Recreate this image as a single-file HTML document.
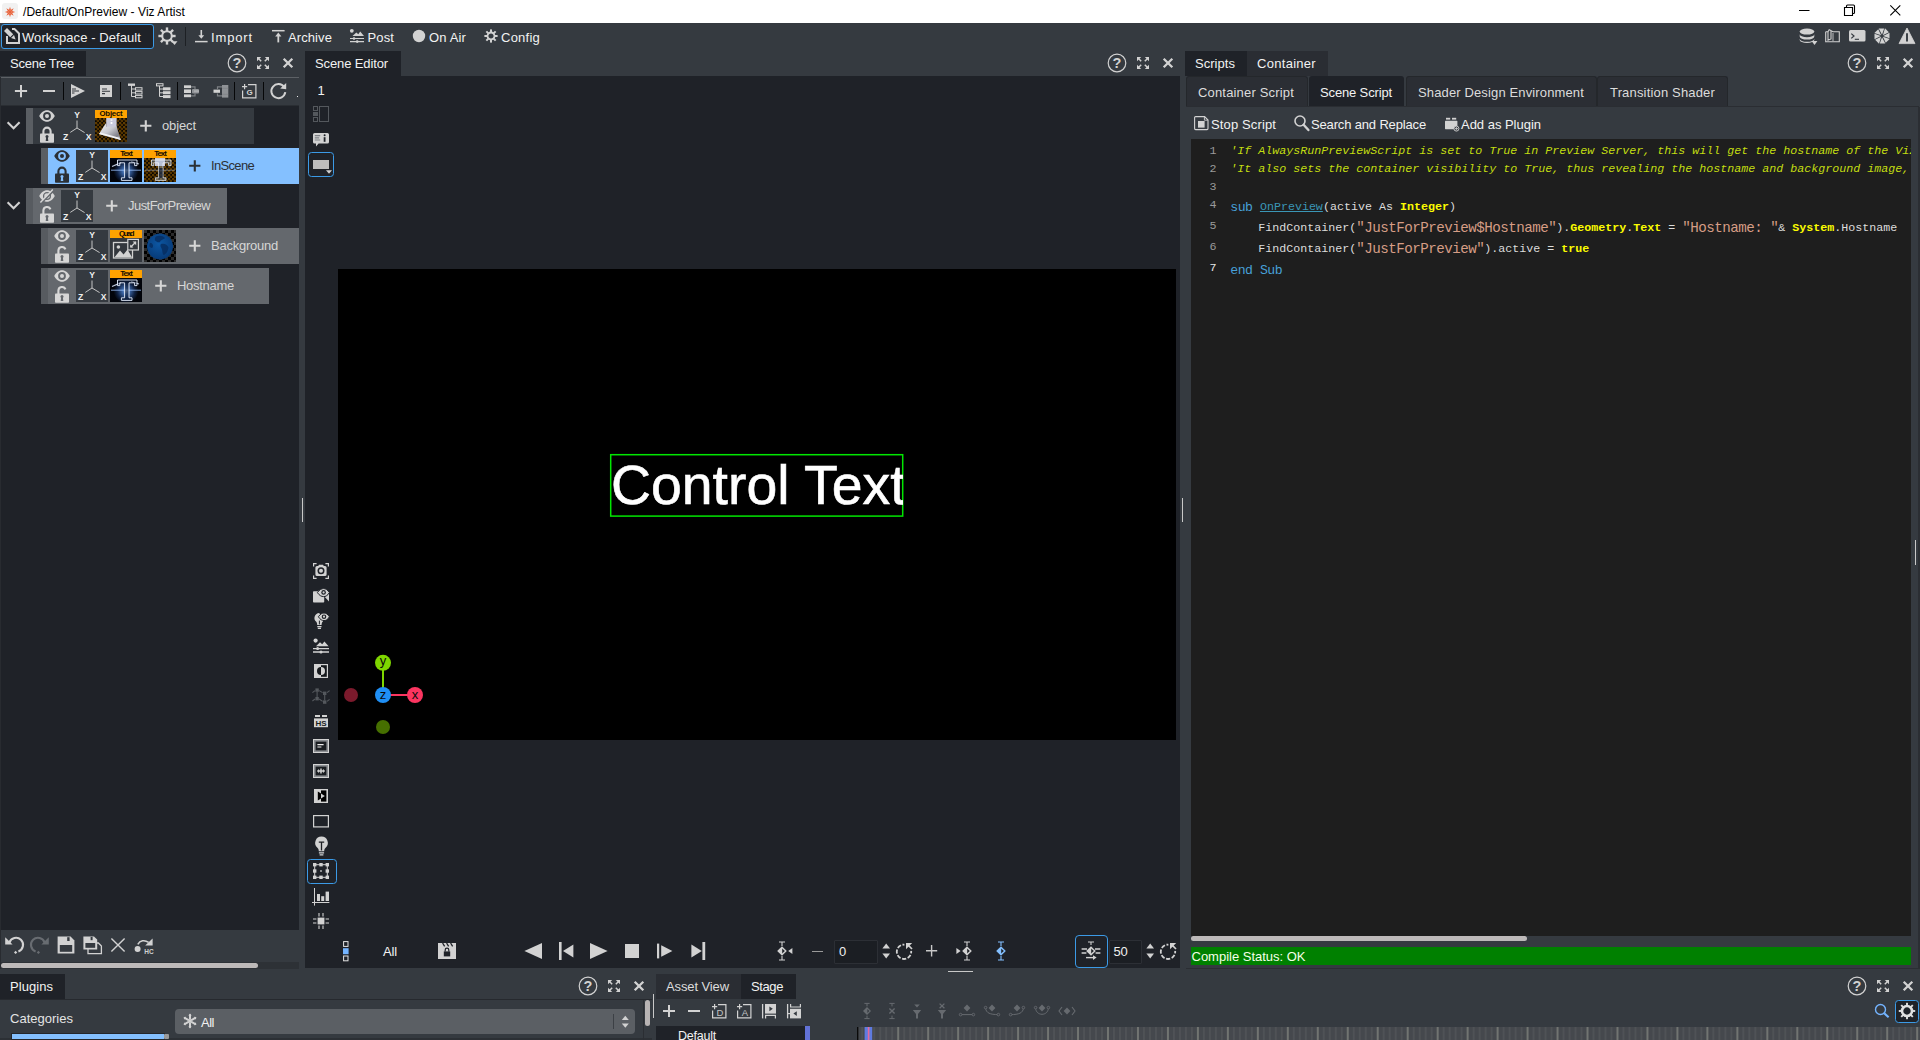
<!DOCTYPE html>
<html lang="en"><head><meta charset="utf-8"><title>/Default/OnPreview - Viz Artist</title>
<style>
html,body{margin:0;padding:0}
body{width:1920px;height:1040px;overflow:hidden;background:#353a40;position:relative;font-family:"Liberation Sans","DejaVu Sans",sans-serif;}
div,span,svg{position:absolute;display:block}
.t{font-family:"Liberation Sans","DejaVu Sans",sans-serif;white-space:pre}
.m{font-family:"Liberation Mono","DejaVu Sans Mono",monospace;white-space:pre}
svg{overflow:visible}
</style></head><body>
<div style="left:0px;top:0px;width:1920px;height:23px;background:#ffffff;"></div>
<span class="t" style="left:23px;top:3.84px;font-size:12px;line-height:16px;color:#000;letter-spacing:0.048px;">/Default/OnPreview - Viz Artist</span>
<div style="left:1px;top:24px;width:151px;height:23px;background:#1f2228;border:1px solid #3b9ae6;border-radius:3px"></div>
<span class="t" style="left:22px;top:29.00px;font-size:13px;line-height:17px;color:#f2f2f2;letter-spacing:0.077px;">Workspace - Default</span>
<div style="left:185px;top:27px;width:1px;height:19px;background:#1d2024;"></div>
<span class="t" style="left:211px;top:29.00px;font-size:13px;line-height:17px;color:#f2f2f2;letter-spacing:0.859px;">Import</span>
<span class="t" style="left:288px;top:29.00px;font-size:13px;line-height:17px;color:#f2f2f2;letter-spacing:0.092px;">Archive</span>
<span class="t" style="left:367.5px;top:29.00px;font-size:13px;line-height:17px;color:#f2f2f2;letter-spacing:0.121px;">Post</span>
<span class="t" style="left:429px;top:29.00px;font-size:13px;line-height:17px;color:#f2f2f2;letter-spacing:0.146px;">On Air</span>
<span class="t" style="left:501px;top:29.00px;font-size:13px;line-height:17px;color:#f2f2f2;letter-spacing:0.237px;">Config</span>
<div style="left:0px;top:51px;width:86px;height:25px;background:#1f2228;"></div>
<span class="t" style="left:10px;top:55.00px;font-size:13px;line-height:17px;color:#f2f2f2;letter-spacing:-0.250px;">Scene Tree</span>
<div style="left:0px;top:77px;width:1px;height:892px;background:#282b30;"></div>
<div style="left:1px;top:77px;width:298px;height:1px;background:#5d6166;"></div>
<div style="left:1px;top:105px;width:298px;height:1px;background:#2a2e33;"></div>
<div style="left:1px;top:106px;width:298px;height:824px;background:#1f2228;"></div>
<div style="left:26px;top:108px;width:228px;height:36px;background:#353a40;"></div>
<div style="left:26px;top:108px;width:7px;height:36px;background:#5a5e63;"></div>
<div style="left:41px;top:148px;width:258px;height:36px;background:#84c0ff;"></div>
<div style="left:41px;top:148px;width:7px;height:36px;background:#5a5e63;"></div>
<div style="left:26px;top:188px;width:201px;height:36px;background:#64686d;"></div>
<div style="left:26px;top:188px;width:7px;height:36px;background:#575b60;"></div>
<div style="left:41px;top:228px;width:258px;height:36px;background:#64686d;"></div>
<div style="left:41px;top:228px;width:7px;height:36px;background:#575b60;"></div>
<div style="left:41px;top:268px;width:228px;height:36px;background:#64686d;"></div>
<div style="left:41px;top:268px;width:7px;height:36px;background:#575b60;"></div>
<span class="t" style="left:162px;top:117.00px;font-size:13px;line-height:17px;color:#d6d6d6;letter-spacing:-0.117px;">object</span>
<span class="t" style="left:211px;top:157.00px;font-size:13px;line-height:17px;color:#2b3036;letter-spacing:-0.672px;">InScene</span>
<span class="t" style="left:128px;top:197.00px;font-size:13px;line-height:17px;color:#d6d6d6;letter-spacing:-0.541px;">JustForPreview</span>
<span class="t" style="left:211px;top:237.00px;font-size:13px;line-height:17px;color:#d6d6d6;letter-spacing:-0.239px;">Background</span>
<span class="t" style="left:177px;top:277.00px;font-size:13px;line-height:17px;color:#d6d6d6;letter-spacing:-0.281px;">Hostname</span>
<div style="left:1px;top:930px;width:298px;height:33px;background:#353a40;"></div>
<div style="left:1px;top:962px;width:298px;height:7px;background:#2d3136;"></div>
<div style="left:1px;top:963px;width:257px;height:5px;background:#bdb9b9;border-radius:3px"></div>
<div style="left:305px;top:51px;width:96px;height:25px;background:#1f2228;"></div>
<span class="t" style="left:315px;top:55.00px;font-size:13px;line-height:17px;color:#f2f2f2;letter-spacing:-0.120px;">Scene Editor</span>
<div style="left:305px;top:76px;width:875px;height:892px;background:#1f2228;"></div>
<div style="left:338px;top:269px;width:838px;height:471px;background:#000;"></div>
<span class="t" style="left:317.5px;top:82.00px;font-size:13px;line-height:17px;color:#f2f2f2;">1</span>
<svg style="left:609px;top:453px;" width="296" height="65" viewBox="0 0 296 65"><rect x="1.7" y="1.7" width="292" height="61.4" fill="none" stroke="#00e600" stroke-width="1.5"/></svg>
<span class="t" style="left:611px;top:448.80px;font-size:55.4px;line-height:72px;color:#fff;width:291.5px;overflow:hidden;-webkit-text-stroke:0.6px #fff;">Control Text</span>
<div style="left:1185px;top:51px;width:62px;height:25px;background:#1f2228;"></div>
<div style="left:1247px;top:51px;width:81px;height:25px;background:#2a2d33;"></div>
<span class="t" style="left:1195px;top:55.00px;font-size:13px;line-height:17px;color:#f2f2f2;letter-spacing:0.038px;">Scripts</span>
<span class="t" style="left:1257px;top:55.00px;font-size:13px;line-height:17px;color:#f2f2f2;letter-spacing:0.292px;">Container</span>
<div style="left:1186px;top:76px;width:120px;height:30px;background:#2b2e34;border:1px solid #24272b;border-bottom:none;border-radius:3px 3px 0 0"></div>
<div style="left:1309px;top:76px;width:95px;height:30px;background:#1f2228;border-radius:3px 3px 0 0"></div>
<div style="left:1406px;top:76px;width:189px;height:30px;background:#2b2e34;border:1px solid #24272b;border-bottom:none;border-radius:3px 3px 0 0"></div>
<div style="left:1597px;top:76px;width:129px;height:30px;background:#2b2e34;border:1px solid #24272b;border-bottom:none;border-radius:3px 3px 0 0"></div>
<div style="left:1186px;top:106px;width:733px;height:1px;background:#2a2d32;"></div>
<div style="left:1918px;top:107px;width:2px;height:862px;background:#2b2e33;"></div>
<div style="left:1186px;top:968px;width:734px;height:1px;background:#2b2e33;"></div>
<span class="t" style="left:1198px;top:84.00px;font-size:13px;line-height:17px;color:#dcdcdc;letter-spacing:0.174px;">Container Script</span>
<span class="t" style="left:1320px;top:84.00px;font-size:13px;line-height:17px;color:#f2f2f2;letter-spacing:-0.142px;">Scene Script</span>
<span class="t" style="left:1418px;top:84.00px;font-size:13px;line-height:17px;color:#dcdcdc;letter-spacing:0.136px;">Shader Design Environment</span>
<span class="t" style="left:1610px;top:84.00px;font-size:13px;line-height:17px;color:#dcdcdc;letter-spacing:0.168px;">Transition Shader</span>
<span class="t" style="left:1211px;top:116.00px;font-size:13px;line-height:17px;color:#f2f2f2;letter-spacing:0.128px;">Stop Script</span>
<span class="t" style="left:1311px;top:116.00px;font-size:13px;line-height:17px;color:#f2f2f2;letter-spacing:-0.156px;">Search and Replace</span>
<span class="t" style="left:1461px;top:116.00px;font-size:13px;line-height:17px;color:#f2f2f2;letter-spacing:-0.018px;">Add as Plugin</span>
<div style="left:1191px;top:139px;width:720px;height:797px;background:#1e1e1e;"></div>
<div style="left:1191px;top:936px;width:336px;height:5px;background:#bdb9b9;border-radius:3px"></div>
<div style="left:1191px;top:947px;width:720px;height:18px;background:#008000;"></div>
<span class="t" style="left:1191.5px;top:948.00px;font-size:13px;line-height:17px;color:#f4ffe8;letter-spacing:-0.009px;">Compile Status: OK</span>
<div style="left:0px;top:974px;width:65px;height:25px;background:#1f2228;"></div>
<span class="t" style="left:10px;top:978.00px;font-size:13px;line-height:17px;color:#f2f2f2;letter-spacing:0.051px;">Plugins</span>
<div style="left:0px;top:999px;width:652px;height:1px;background:#26292e;"></div>
<span class="t" style="left:10px;top:1010.00px;font-size:13px;line-height:17px;color:#e4e4e4;letter-spacing:0.013px;">Categories</span>
<div style="left:175px;top:1009px;width:460px;height:25px;background:#5b5f64;border-radius:4px"></div>
<span class="t" style="left:201px;top:1014.00px;font-size:13px;line-height:17px;color:#f2f2f2;letter-spacing:-0.484px;">All</span>
<div style="left:613px;top:1014px;width:1px;height:15px;background:#3c4045;"></div>
<div style="left:0px;top:1038px;width:652px;height:2px;background:#2c3035;"></div>
<div style="left:11px;top:1033px;width:152px;height:5px;background:#84c0ff;border:1px solid #24272c"></div>
<div style="left:164px;top:1034px;width:5px;height:5px;background:#9a9a9a;border-radius:1px"></div>
<div style="left:645px;top:1000px;width:5px;height:26px;background:#b8b4b4;border-radius:3px"></div>
<div style="left:643px;top:1000px;width:1px;height:40px;background:#2b2e33;"></div>
<div style="left:653px;top:994px;width:1px;height:24px;background:#c8c8c8;"></div>
<div style="left:656px;top:974px;width:85px;height:25px;background:#2a2d33;"></div>
<div style="left:741px;top:974px;width:55px;height:25px;background:#1f2228;"></div>
<span class="t" style="left:666px;top:978.00px;font-size:13px;line-height:17px;color:#dcdcdc;letter-spacing:-0.108px;">Asset View</span>
<span class="t" style="left:751px;top:978.00px;font-size:13px;line-height:17px;color:#f2f2f2;letter-spacing:-0.397px;">Stage</span>
<div style="left:656px;top:1026px;width:149px;height:14px;background:#1f2228;"></div>
<div style="left:805px;top:1026px;width:5px;height:14px;background:#6272d6;"></div>
<span class="t" style="left:678px;top:1027.67px;font-size:12.5px;line-height:16px;color:#f2f2f2;letter-spacing:-0.230px;">Default</span>
<div style="left:302px;top:498px;width:1px;height:24px;background:#c8c8c8;"></div>
<div style="left:1182px;top:498px;width:1px;height:24px;background:#c8c8c8;"></div>
<div style="left:1915px;top:540px;width:1px;height:25px;background:#c8c8c8;"></div>
<div style="left:948px;top:971px;width:25px;height:1px;background:#c8c8c8;"></div>
<div style="left:1191px;top:139px;width:720px;height:797px;overflow:hidden">
<span class="m" style="left:18.5px;top:5.39px;font-size:11.67px;line-height:15px;color:#9a9a9a;letter-spacing:-0.400px;">1</span>
<span class="m" style="left:18.5px;top:23.39px;font-size:11.67px;line-height:15px;color:#9a9a9a;letter-spacing:-0.400px;">2</span>
<span class="m" style="left:18.5px;top:41.39px;font-size:11.67px;line-height:15px;color:#9a9a9a;letter-spacing:-0.400px;">3</span>
<span class="m" style="left:18.5px;top:59.39px;font-size:11.67px;line-height:15px;color:#9a9a9a;letter-spacing:-0.400px;">4</span>
<span class="m" style="left:18.5px;top:80.39px;font-size:11.67px;line-height:15px;color:#9a9a9a;letter-spacing:-0.400px;">5</span>
<span class="m" style="left:18.5px;top:101.39px;font-size:11.67px;line-height:15px;color:#9a9a9a;letter-spacing:-0.400px;">6</span>
<span class="m" style="left:18.5px;top:122.39px;font-size:11.67px;line-height:15px;color:#e8e8e8;letter-spacing:-0.400px;">7</span>
<span class="m" style="left:39.3px;top:5.39px;font-size:11.67px;line-height:15px;color:#c3dd11;letter-spacing:0.005px;font-style:italic;">&#x27;If AlwaysRunPreviewScript is set to True in Preview Server, this will get the hostname of the Viz Engine</span>
<span class="m" style="left:39.3px;top:23.39px;font-size:11.67px;line-height:15px;color:#c3dd11;letter-spacing:0.005px;font-style:italic;">&#x27;It also sets the container visibility to True, thus revealing the hostname and background image, and</span>
<span class="m" style="left:39.3px;top:59.98px;font-size:13.2px;line-height:17px;color:#47a0d8;letter-spacing:-0.514px;">sub </span>
<span class="m" style="left:68.9px;top:61.39px;font-size:11.67px;line-height:15px;color:#3a96b6;letter-spacing:0.003px;text-decoration:underline;">OnPreview</span>
<span class="m" style="left:131.9px;top:61.39px;font-size:11.67px;line-height:15px;color:#dcdcdc;letter-spacing:0.004px;">(active As </span>
<span class="m" style="left:208.9px;top:61.39px;font-size:11.67px;line-height:15px;color:#fbfb00;letter-spacing:0.004px;font-weight:700;">Integer</span>
<span class="m" style="left:257.9px;top:61.39px;font-size:11.67px;line-height:15px;color:#dcdcdc;letter-spacing:0.000px;">)</span>
<span class="m" style="left:39.3px;top:82.39px;font-size:11.67px;line-height:15px;color:#dcdcdc;letter-spacing:0.004px;">    FindContainer(</span>
<span class="m" style="left:165.3px;top:80.22px;font-size:14.2px;line-height:18px;color:#d69d85;letter-spacing:-0.514px;">&quot;JustForPreview$Hostname&quot;</span>
<span class="m" style="left:365.3px;top:82.39px;font-size:11.67px;line-height:15px;color:#dcdcdc;letter-spacing:0.000px;">).</span>
<span class="m" style="left:379.3px;top:82.39px;font-size:11.67px;line-height:15px;color:#fbfb00;letter-spacing:0.004px;font-weight:700;">Geometry</span>
<span class="m" style="left:435.3px;top:82.39px;font-size:11.67px;line-height:15px;color:#dcdcdc;letter-spacing:0.000px;">.</span>
<span class="m" style="left:442.3px;top:82.39px;font-size:11.67px;line-height:15px;color:#fbfb00;letter-spacing:0.004px;font-weight:700;">Text</span>
<span class="m" style="left:470.3px;top:82.39px;font-size:11.67px;line-height:15px;color:#dcdcdc;letter-spacing:0.000px;"> = </span>
<span class="m" style="left:491.3px;top:80.22px;font-size:14.2px;line-height:18px;color:#d69d85;letter-spacing:-0.514px;">&quot;Hostname: &quot;</span>
<span class="m" style="left:587.3px;top:82.39px;font-size:11.67px;line-height:15px;color:#dcdcdc;letter-spacing:0.000px;">&amp; </span>
<span class="m" style="left:601.3px;top:82.39px;font-size:11.67px;line-height:15px;color:#fbfb00;letter-spacing:0.003px;font-weight:700;">System</span>
<span class="m" style="left:643.3px;top:82.39px;font-size:11.67px;line-height:15px;color:#dcdcdc;letter-spacing:0.003px;">.Hostname</span>
<span class="m" style="left:39.3px;top:103.39px;font-size:11.67px;line-height:15px;color:#dcdcdc;letter-spacing:0.004px;">    FindContainer(</span>
<span class="m" style="left:165.3px;top:101.22px;font-size:14.2px;line-height:18px;color:#d69d85;letter-spacing:-0.515px;">&quot;JustForPreview&quot;</span>
<span class="m" style="left:293.3px;top:103.39px;font-size:11.67px;line-height:15px;color:#dcdcdc;letter-spacing:0.004px;">).active = </span>
<span class="m" style="left:370.3px;top:103.39px;font-size:11.67px;line-height:15px;color:#fbfb00;letter-spacing:0.004px;font-weight:700;">true</span>
<span class="m" style="left:39.3px;top:122.98px;font-size:13.2px;line-height:17px;color:#47a0d8;letter-spacing:-0.515px;">end Sub</span>
</div>
<svg style="left:227px;top:53px;" width="20" height="20" viewBox="0 0 20 20"><circle cx="10" cy="10" r="8.8" fill="none" stroke="#d2d2d2" stroke-width="1.2"/><text x="10" y="15" font-family="Liberation Sans,sans-serif" font-weight="700" font-size="14.5" text-anchor="middle" fill="#d2d2d2">?</text></svg>
<svg style="left:256px;top:56px;" width="14" height="14" viewBox="-7 -7 14 14"><path d="M-6 -6 L-1.7999999999999998 -6 L-6 -1.7999999999999998Z" fill="#d2d2d2"/><path d="M-4.5 -4.5 L-1.8 -1.8" stroke="#d2d2d2" stroke-width="1.5" fill="none"/><path d="M6 -6 L1.7999999999999998 -6 L6 -1.7999999999999998Z" fill="#d2d2d2"/><path d="M4.5 -4.5 L1.8 -1.8" stroke="#d2d2d2" stroke-width="1.5" fill="none"/><path d="M-6 6 L-1.7999999999999998 6 L-6 1.7999999999999998Z" fill="#d2d2d2"/><path d="M-4.5 4.5 L-1.8 1.8" stroke="#d2d2d2" stroke-width="1.5" fill="none"/><path d="M6 6 L1.7999999999999998 6 L6 1.7999999999999998Z" fill="#d2d2d2"/><path d="M4.5 4.5 L1.8 1.8" stroke="#d2d2d2" stroke-width="1.5" fill="none"/></svg>
<svg style="left:282px;top:57px;" width="12" height="12" viewBox="-6 -6 12 12"><path d="M-4.3 -4.3L4.3 4.3M4.3 -4.3L-4.3 4.3" stroke="#d2d2d2" stroke-width="2.3" fill="none"/></svg>
<svg style="left:1107px;top:53px;" width="20" height="20" viewBox="0 0 20 20"><circle cx="10" cy="10" r="8.8" fill="none" stroke="#d2d2d2" stroke-width="1.2"/><text x="10" y="15" font-family="Liberation Sans,sans-serif" font-weight="700" font-size="14.5" text-anchor="middle" fill="#d2d2d2">?</text></svg>
<svg style="left:1136px;top:56px;" width="14" height="14" viewBox="-7 -7 14 14"><path d="M-6 -6 L-1.7999999999999998 -6 L-6 -1.7999999999999998Z" fill="#d2d2d2"/><path d="M-4.5 -4.5 L-1.8 -1.8" stroke="#d2d2d2" stroke-width="1.5" fill="none"/><path d="M6 -6 L1.7999999999999998 -6 L6 -1.7999999999999998Z" fill="#d2d2d2"/><path d="M4.5 -4.5 L1.8 -1.8" stroke="#d2d2d2" stroke-width="1.5" fill="none"/><path d="M-6 6 L-1.7999999999999998 6 L-6 1.7999999999999998Z" fill="#d2d2d2"/><path d="M-4.5 4.5 L-1.8 1.8" stroke="#d2d2d2" stroke-width="1.5" fill="none"/><path d="M6 6 L1.7999999999999998 6 L6 1.7999999999999998Z" fill="#d2d2d2"/><path d="M4.5 4.5 L1.8 1.8" stroke="#d2d2d2" stroke-width="1.5" fill="none"/></svg>
<svg style="left:1162px;top:57px;" width="12" height="12" viewBox="-6 -6 12 12"><path d="M-4.3 -4.3L4.3 4.3M4.3 -4.3L-4.3 4.3" stroke="#d2d2d2" stroke-width="2.3" fill="none"/></svg>
<svg style="left:1847px;top:53px;" width="20" height="20" viewBox="0 0 20 20"><circle cx="10" cy="10" r="8.8" fill="none" stroke="#d2d2d2" stroke-width="1.2"/><text x="10" y="15" font-family="Liberation Sans,sans-serif" font-weight="700" font-size="14.5" text-anchor="middle" fill="#d2d2d2">?</text></svg>
<svg style="left:1876px;top:56px;" width="14" height="14" viewBox="-7 -7 14 14"><path d="M-6 -6 L-1.7999999999999998 -6 L-6 -1.7999999999999998Z" fill="#d2d2d2"/><path d="M-4.5 -4.5 L-1.8 -1.8" stroke="#d2d2d2" stroke-width="1.5" fill="none"/><path d="M6 -6 L1.7999999999999998 -6 L6 -1.7999999999999998Z" fill="#d2d2d2"/><path d="M4.5 -4.5 L1.8 -1.8" stroke="#d2d2d2" stroke-width="1.5" fill="none"/><path d="M-6 6 L-1.7999999999999998 6 L-6 1.7999999999999998Z" fill="#d2d2d2"/><path d="M-4.5 4.5 L-1.8 1.8" stroke="#d2d2d2" stroke-width="1.5" fill="none"/><path d="M6 6 L1.7999999999999998 6 L6 1.7999999999999998Z" fill="#d2d2d2"/><path d="M4.5 4.5 L1.8 1.8" stroke="#d2d2d2" stroke-width="1.5" fill="none"/></svg>
<svg style="left:1902px;top:57px;" width="12" height="12" viewBox="-6 -6 12 12"><path d="M-4.3 -4.3L4.3 4.3M4.3 -4.3L-4.3 4.3" stroke="#d2d2d2" stroke-width="2.3" fill="none"/></svg>
<svg style="left:578px;top:976px;" width="20" height="20" viewBox="0 0 20 20"><circle cx="10" cy="10" r="8.8" fill="none" stroke="#d2d2d2" stroke-width="1.2"/><text x="10" y="15" font-family="Liberation Sans,sans-serif" font-weight="700" font-size="14.5" text-anchor="middle" fill="#d2d2d2">?</text></svg>
<svg style="left:607px;top:979px;" width="14" height="14" viewBox="-7 -7 14 14"><path d="M-6 -6 L-1.7999999999999998 -6 L-6 -1.7999999999999998Z" fill="#d2d2d2"/><path d="M-4.5 -4.5 L-1.8 -1.8" stroke="#d2d2d2" stroke-width="1.5" fill="none"/><path d="M6 -6 L1.7999999999999998 -6 L6 -1.7999999999999998Z" fill="#d2d2d2"/><path d="M4.5 -4.5 L1.8 -1.8" stroke="#d2d2d2" stroke-width="1.5" fill="none"/><path d="M-6 6 L-1.7999999999999998 6 L-6 1.7999999999999998Z" fill="#d2d2d2"/><path d="M-4.5 4.5 L-1.8 1.8" stroke="#d2d2d2" stroke-width="1.5" fill="none"/><path d="M6 6 L1.7999999999999998 6 L6 1.7999999999999998Z" fill="#d2d2d2"/><path d="M4.5 4.5 L1.8 1.8" stroke="#d2d2d2" stroke-width="1.5" fill="none"/></svg>
<svg style="left:633px;top:980px;" width="12" height="12" viewBox="-6 -6 12 12"><path d="M-4.3 -4.3L4.3 4.3M4.3 -4.3L-4.3 4.3" stroke="#d2d2d2" stroke-width="2.3" fill="none"/></svg>
<svg style="left:1847px;top:976px;" width="20" height="20" viewBox="0 0 20 20"><circle cx="10" cy="10" r="8.8" fill="none" stroke="#d2d2d2" stroke-width="1.2"/><text x="10" y="15" font-family="Liberation Sans,sans-serif" font-weight="700" font-size="14.5" text-anchor="middle" fill="#d2d2d2">?</text></svg>
<svg style="left:1876px;top:979px;" width="14" height="14" viewBox="-7 -7 14 14"><path d="M-6 -6 L-1.7999999999999998 -6 L-6 -1.7999999999999998Z" fill="#d2d2d2"/><path d="M-4.5 -4.5 L-1.8 -1.8" stroke="#d2d2d2" stroke-width="1.5" fill="none"/><path d="M6 -6 L1.7999999999999998 -6 L6 -1.7999999999999998Z" fill="#d2d2d2"/><path d="M4.5 -4.5 L1.8 -1.8" stroke="#d2d2d2" stroke-width="1.5" fill="none"/><path d="M-6 6 L-1.7999999999999998 6 L-6 1.7999999999999998Z" fill="#d2d2d2"/><path d="M-4.5 4.5 L-1.8 1.8" stroke="#d2d2d2" stroke-width="1.5" fill="none"/><path d="M6 6 L1.7999999999999998 6 L6 1.7999999999999998Z" fill="#d2d2d2"/><path d="M4.5 4.5 L1.8 1.8" stroke="#d2d2d2" stroke-width="1.5" fill="none"/></svg>
<svg style="left:1902px;top:980px;" width="12" height="12" viewBox="-6 -6 12 12"><path d="M-4.3 -4.3L4.3 4.3M4.3 -4.3L-4.3 4.3" stroke="#d2d2d2" stroke-width="2.3" fill="none"/></svg>
<div style="left:63px;top:82px;width:1px;height:18px;background:#060708;"></div>
<div style="left:120px;top:82px;width:1px;height:18px;background:#060708;"></div>
<div style="left:177px;top:82px;width:1px;height:18px;background:#060708;"></div>
<div style="left:234px;top:82px;width:1px;height:18px;background:#060708;"></div>
<div style="left:263px;top:82px;width:1px;height:18px;background:#060708;"></div>
<svg style="left:14px;top:84px;" width="14" height="14" viewBox="0 0 14 14"><path d="M7 1V13.2M0.9 7H13.1" stroke="#d2d2d2" stroke-width="2" fill="none"/></svg>
<svg style="left:42px;top:84px;" width="14" height="14" viewBox="0 0 14 14"><path d="M1 7H13" stroke="#d2d2d2" stroke-width="2" fill="none"/></svg>
<svg style="left:70px;top:83px;" width="16" height="16" viewBox="0 0 16 16"><path d="M1 1L15 8L1 15Z" fill="#d2d2d2"/><path d="M2 6H6M2 8H9M2 10H4.5" stroke="#33373d" stroke-width="1"/></svg>
<svg style="left:100px;top:85px;" width="12" height="12" viewBox="0 0 12 12"><rect width="12" height="12" fill="#d2d2d2"/><path d="M2 4H7M2 6.3H10M2 8.6H5" stroke="#33373d" stroke-width="1.1"/></svg>
<svg style="left:128px;top:83px;" width="15" height="16" viewBox="0 0 15 16"><rect x="0" y="0.5" width="7" height="2.4" fill="#d2d2d2"/><path d="M3.5 2V13.5H7M3.5 6H7M3.5 9.8H7" stroke="#d2d2d2" stroke-width="1" fill="none"/><rect x="7.5" y="4.7" width="6.5" height="2.4" fill="none" stroke="#d2d2d2"/><rect x="7.5" y="8.6" width="6.5" height="2.4" fill="none" stroke="#d2d2d2"/><rect x="7.5" y="12.4" width="6.5" height="2.4" fill="none" stroke="#d2d2d2"/></svg>
<svg style="left:156px;top:83px;" width="15" height="16" viewBox="0 0 15 16"><rect x="0.5" y="0.7" width="6.5" height="2.2" fill="none" stroke="#d2d2d2"/><path d="M3.5 3V13.5H7M3.5 6H7M3.5 9.8H7" stroke="#d2d2d2" stroke-width="1" fill="none"/><rect x="7" y="4.3" width="7.5" height="3" fill="#d2d2d2"/><rect x="7" y="8.2" width="7.5" height="3" fill="#d2d2d2"/><rect x="7" y="12.1" width="7.5" height="3" fill="#d2d2d2"/></svg>
<svg style="left:184px;top:85px;" width="16" height="13" viewBox="0 0 16 13"><rect x="0" y="0.3" width="7" height="2.8" fill="#d2d2d2"/><rect x="0" y="4.4" width="7" height="3.6" fill="#d2d2d2"/><rect x="0" y="9.4" width="7" height="2.8" fill="#d2d2d2"/><path d="M7 1.8H11V4M7 10.8H11V8.5" stroke="#7d8084" stroke-width="1.2" fill="none"/><rect x="8" y="4" width="7" height="4.4" rx="1" fill="#8f9296"/><rect x="10" y="5.2" width="5" height="2" fill="#a9abae"/></svg>
<svg style="left:213px;top:85px;" width="16" height="13" viewBox="0 0 16 13"><rect x="0.5" y="4.6" width="6.5" height="3.2" fill="#d2d2d2"/><path d="M9.5 1.8H4.5V4M9.5 10.8H4.5V8.5" stroke="#7d8084" stroke-width="1.2" fill="none"/><rect x="9" y="0" width="6.3" height="12.6" fill="#8f9296"/><path d="M9 3.3H15.3M9 9.3H15.3" stroke="#7a7d81" stroke-width="0.6"/></svg>
<svg style="left:242px;top:84px;" width="15" height="15" viewBox="0 0 15 15"><path d="M6 0.6H13.9V13.9H0.6V6.5" stroke="#d2d2d2" stroke-width="1.2" fill="none"/><path d="M2.6 0V5.2M0 2.6H5.2" stroke="#d2d2d2" stroke-width="1.2"/><text x="7.6" y="11.4" font-family="Liberation Sans,sans-serif" font-weight="700" font-size="8" text-anchor="middle" fill="#d2d2d2">G</text></svg>
<svg style="left:269px;top:82px;" width="19" height="19" viewBox="0 0 19 19"><path d="M15.2 5.2A7 7 0 1 0 16.3 10.2" stroke="#d2d2d2" stroke-width="2" fill="none"/><path d="M11.2 6.6L17.2 1V7.3Z" fill="#d2d2d2"/></svg>
<div style="left:297px;top:96px;width:1px;height:1px;background:#e8e8e8;"></div>
<div style="left:2px;top:3px;width:16px;height:16px;background:#f1f1f1;border-radius:3px"></div>
<svg style="left:4px;top:6px;" width="12" height="12" viewBox="-6 -6 12 12"><path d="M0 0L-0.9 -2.2L0 -5.2L0.9 -2.2Z" fill="#e9633c" transform="rotate(0)"/><path d="M0 0L-0.9 -2.2L0 -5.2L0.9 -2.2Z" fill="#e9633c" transform="rotate(45)"/><path d="M0 0L-0.9 -2.2L0 -5.2L0.9 -2.2Z" fill="#e9633c" transform="rotate(90)"/><path d="M0 0L-0.9 -2.2L0 -5.2L0.9 -2.2Z" fill="#e9633c" transform="rotate(135)"/><path d="M0 0L-0.9 -2.2L0 -5.2L0.9 -2.2Z" fill="#e9633c" transform="rotate(180)"/><path d="M0 0L-0.9 -2.2L0 -5.2L0.9 -2.2Z" fill="#e9633c" transform="rotate(225)"/><path d="M0 0L-0.9 -2.2L0 -5.2L0.9 -2.2Z" fill="#e9633c" transform="rotate(270)"/><path d="M0 0L-0.9 -2.2L0 -5.2L0.9 -2.2Z" fill="#e9633c" transform="rotate(315)"/><circle r="1.4" fill="#e9633c"/></svg>
<svg style="left:1799px;top:5px;" width="11" height="11" viewBox="0 0 11 11"><path d="M0 5.5H10.5" stroke="#000" stroke-width="1"/></svg>
<svg style="left:1844px;top:4px;" width="12" height="12" viewBox="0 0 12 12"><path d="M0.5 3.5H8.5V11.5H0.5Z" fill="none" stroke="#000" stroke-width="1.1"/><path d="M2.5 3.5V2A1 1 0 0 1 3.5 1H9.5A1 1 0 0 1 10.5 2V8.5A1 1 0 0 1 9.5 9.5H8.5" fill="none" stroke="#000" stroke-width="1.1"/></svg>
<svg style="left:1890px;top:5px;" width="11" height="11" viewBox="0 0 11 11"><path d="M0.3 0.3L10.3 10.3M10.3 0.3L0.3 10.3" stroke="#000" stroke-width="1.1"/></svg>
<svg style="left:3px;top:26px;" width="19" height="19" viewBox="0 0 19 19"><path d="M4 10V17H16V7.5L11.5 3H9" stroke="#d2d2d2" stroke-width="2" fill="none" stroke-linejoin="miter"/><path d="M1 5L4 2L10.2 8.2L7.2 11.2Z" fill="#d2d2d2"/><path d="M8 12L11 9L12.6 13.6Z" fill="#d2d2d2"/></svg>
<svg style="left:158px;top:27px;" width="20" height="20" viewBox="0 0 20 20"><g transform="translate(9 9)"><rect x="-1.2" y="-8.6" width="2.4" height="3.999999999999999" fill="#d2d2d2" transform="rotate(0)"/><rect x="-1.2" y="-8.6" width="2.4" height="3.999999999999999" fill="#d2d2d2" transform="rotate(45)"/><rect x="-1.2" y="-8.6" width="2.4" height="3.999999999999999" fill="#d2d2d2" transform="rotate(90)"/><rect x="-1.2" y="-8.6" width="2.4" height="3.999999999999999" fill="#d2d2d2" transform="rotate(135)"/><rect x="-1.2" y="-8.6" width="2.4" height="3.999999999999999" fill="#d2d2d2" transform="rotate(180)"/><rect x="-1.2" y="-8.6" width="2.4" height="3.999999999999999" fill="#d2d2d2" transform="rotate(225)"/><rect x="-1.2" y="-8.6" width="2.4" height="3.999999999999999" fill="#d2d2d2" transform="rotate(270)"/><rect x="-1.2" y="-8.6" width="2.4" height="3.999999999999999" fill="#d2d2d2" transform="rotate(315)"/><circle r="4.800000000000001" fill="none" stroke="#d2d2d2" stroke-width="2.1"/></g><path d="M13.5 14.2H19.5L16.5 18Z" fill="#d2d2d2"/></svg>
<svg style="left:195px;top:29px;" width="13" height="14" viewBox="0 0 13 14"><path d="M6.3 1V8" stroke="#d2d2d2" stroke-width="1.6"/><path d="M3.4 6.2H9.2L6.3 9.8Z" fill="#d2d2d2"/><path d="M0 12.6H12.6" stroke="#d2d2d2" stroke-width="1.5"/></svg>
<svg style="left:272px;top:29px;" width="13" height="14" viewBox="0 0 13 14"><path d="M0 1.7H12.6" stroke="#d2d2d2" stroke-width="1.5"/><path d="M6.3 6V13.4" stroke="#d2d2d2" stroke-width="1.8"/><path d="M3.2 7.6H9.4L6.3 3.6Z" fill="#d2d2d2"/></svg>
<svg style="left:349px;top:28px;" width="16" height="16" viewBox="0 0 16 16"><circle cx="2.8" cy="2.8" r="1.9" fill="#d2d2d2"/><path d="M3.5 8L7.3 4.6L9.3 6.3L11.2 3.4L15 8Z" fill="#d2d2d2"/><path d="M1 10.5H15M1 13.6H15" stroke="#d2d2d2" stroke-width="1.2"/><circle cx="5" cy="10.5" r="1.3" fill="#d2d2d2"/><circle cx="8.2" cy="13.6" r="1.3" fill="#d2d2d2"/></svg>
<svg style="left:412px;top:29px;" width="14" height="14" viewBox="0 0 14 14"><circle cx="7" cy="7" r="6.2" fill="#d2d2d2"/></svg>
<svg style="left:484px;top:29px;" width="14" height="14" viewBox="0 0 14 14"><g transform="translate(7 7)"><rect x="-1.0" y="-6.6" width="2.0" height="3.3" fill="#d2d2d2" transform="rotate(0)"/><rect x="-1.0" y="-6.6" width="2.0" height="3.3" fill="#d2d2d2" transform="rotate(45)"/><rect x="-1.0" y="-6.6" width="2.0" height="3.3" fill="#d2d2d2" transform="rotate(90)"/><rect x="-1.0" y="-6.6" width="2.0" height="3.3" fill="#d2d2d2" transform="rotate(135)"/><rect x="-1.0" y="-6.6" width="2.0" height="3.3" fill="#d2d2d2" transform="rotate(180)"/><rect x="-1.0" y="-6.6" width="2.0" height="3.3" fill="#d2d2d2" transform="rotate(225)"/><rect x="-1.0" y="-6.6" width="2.0" height="3.3" fill="#d2d2d2" transform="rotate(270)"/><rect x="-1.0" y="-6.6" width="2.0" height="3.3" fill="#d2d2d2" transform="rotate(315)"/><circle r="3.4999999999999996" fill="none" stroke="#d2d2d2" stroke-width="1.8"/></g></svg>
<svg style="left:1799px;top:28px;" width="19" height="18" viewBox="0 0 19 18"><ellipse cx="8" cy="3.6" rx="7.3" ry="3" fill="#d2d2d2"/><path d="M0.7 6.2A7.3 3 0 0 0 15.3 6.2V8.6A7.3 3 0 0 1 0.7 8.6Z" fill="#d2d2d2"/><path d="M0.7 10.8A7.3 3 0 0 0 15.3 10.8V12A7.3 3 0 0 1 0.7 12Z" fill="#d2d2d2"/><path d="M12.6 13H18.4L15.5 17Z" fill="#d2d2d2"/></svg>
<svg style="left:1825px;top:29px;" width="15" height="14" viewBox="0 0 15 14"><path d="M0.7 2.8H3V11.2L6 10V1.6L4.2 0.7L3 2.8M0.7 2.8V12.8H14.3V2.8H8L6 1.6" stroke="#d2d2d2" stroke-width="1.1" fill="none"/><path d="M8 4V12" stroke="#a9abae" stroke-width="1.2"/></svg>
<svg style="left:1849px;top:30px;" width="17" height="12" viewBox="0 0 17 12"><rect x="0" y="0" width="16.5" height="11.6" rx="1.5" fill="#d2d2d2"/><path d="M2.3 3.6L5 6L2.3 8.4" stroke="#353a40" stroke-width="1.2" fill="none"/><path d="M5.8 9.3H10" stroke="#353a40" stroke-width="1.1"/></svg>
<svg style="left:1874px;top:28px;" width="16" height="16" viewBox="-8 -8 16 16"><path d="M0 -1.2L-3.3 -7.5L2.2 -7.5Z" fill="#d2d2d2" transform="rotate(0)"/><path d="M0 -1.2L-3.3 -7.5L2.2 -7.5Z" fill="#d2d2d2" transform="rotate(45)"/><path d="M0 -1.2L-3.3 -7.5L2.2 -7.5Z" fill="#d2d2d2" transform="rotate(90)"/><path d="M0 -1.2L-3.3 -7.5L2.2 -7.5Z" fill="#d2d2d2" transform="rotate(135)"/><path d="M0 -1.2L-3.3 -7.5L2.2 -7.5Z" fill="#d2d2d2" transform="rotate(180)"/><path d="M0 -1.2L-3.3 -7.5L2.2 -7.5Z" fill="#d2d2d2" transform="rotate(225)"/><path d="M0 -1.2L-3.3 -7.5L2.2 -7.5Z" fill="#d2d2d2" transform="rotate(270)"/><path d="M0 -1.2L-3.3 -7.5L2.2 -7.5Z" fill="#d2d2d2" transform="rotate(315)"/></svg>
<svg style="left:1898px;top:27px;" width="18" height="18" viewBox="0 0 18 18"><path d="M9 1L17 16.6H1Z" fill="#d2d2d2" stroke="#d2d2d2" stroke-width="0.8" stroke-linejoin="round"/><path d="M9 6.2V14.6" stroke="#353a40" stroke-width="1.9"/></svg>
<svg width="0" height="0" style="left:0;top:0"><defs>
<pattern id="chk" width="4" height="4" patternUnits="userSpaceOnUse"><rect width="4" height="4" fill="#090500"/><circle cx="1" cy="1" r="0.95" fill="none" stroke="#9a6200" stroke-width="0.7"/><circle cx="3" cy="3" r="0.95" fill="none" stroke="#8a5600" stroke-width="0.7"/></pattern>
<pattern id="chk2" width="6" height="6" patternUnits="userSpaceOnUse"><rect width="6" height="6" fill="#000"/><rect width="3" height="3" fill="#2b2b2b"/><rect x="3" y="3" width="3" height="3" fill="#2b2b2b"/></pattern>
<linearGradient id="cone" x1="0" y1="0" x2="1" y2="1"><stop offset="0" stop-color="#f4f4f6"/><stop offset="0.45" stop-color="#c9c9cf"/><stop offset="0.8" stop-color="#7d7d86"/><stop offset="1" stop-color="#e8e8ee"/></linearGradient>
<radialGradient id="glow" cx="0.5" cy="0.52" r="0.5"><stop offset="0" stop-color="#cfe4ff"/><stop offset="0.25" stop-color="#4f86d8"/><stop offset="0.7" stop-color="#13284f"/><stop offset="1" stop-color="#020409"/></radialGradient>
<radialGradient id="globe" cx="0.45" cy="0.4" r="0.6"><stop offset="0" stop-color="#0d57a3"/><stop offset="1" stop-color="#073a77"/></radialGradient>
</defs></svg>
<svg style="left:6px;top:121px;" width="16" height="10" viewBox="0 0 16 10"><path d="M1.6 1.2L7.6 7.2L13.6 1.2" stroke="#d2d2d2" stroke-width="2.1" fill="none"/></svg>
<svg style="left:6px;top:201px;" width="16" height="10" viewBox="0 0 16 10"><path d="M1.6 1.2L7.6 7.2L13.6 1.2" stroke="#d2d2d2" stroke-width="2.1" fill="none"/></svg>
<svg style="left:39px;top:110px;" width="16" height="12" viewBox="0 0 16 12"><path d="M0.2 6C2.5 1.8 5.5 0.3 8 0.3S13.5 1.8 15.8 6C13.5 10.2 10.5 11.7 8 11.7S2.5 10.2 0.2 6Z" fill="#d2d2d2"/><circle cx="8" cy="6" r="3.9" fill="#353a40"/><circle cx="8" cy="6" r="2" fill="#d2d2d2"/></svg>
<svg style="left:40px;top:126px;" width="14" height="17" viewBox="0 0 14 17"><path d="M3.4 8V5.2A3.6 3.6 0 0 1 10.6 5.2V8" stroke="#d2d2d2" stroke-width="2.1" fill="none"/><rect x="0" y="7.4" width="14" height="9.4" rx="0.8" fill="#d2d2d2"/><circle cx="7" cy="10.6" r="1.5" fill="#353a40"/><path d="M6.2 11H7.8L8.3 15H5.7Z" fill="#353a40"/></svg>
<svg style="left:61px;top:110px;" width="32" height="32" viewBox="0 0 32 32"><path d="M16 10.5V18L9.3 22.4M16 18L23.6 22.6" stroke="#c4c4c4" stroke-width="1" fill="none"/><text x="16" y="8.2" font-family="Liberation Sans,sans-serif" font-weight="700" font-size="8.6" text-anchor="middle" fill="#f0f0f0">Y</text><text x="4.6" y="30" font-family="Liberation Sans,sans-serif" font-weight="700" font-size="8.6" text-anchor="middle" fill="#f0f0f0">Z</text><text x="27.6" y="30" font-family="Liberation Sans,sans-serif" font-weight="700" font-size="8.6" text-anchor="middle" fill="#f0f0f0">X</text></svg>
<svg style="left:95px;top:110px;" width="32" height="32" viewBox="0 0 32 32"><rect width="32" height="32" fill="url(#chk)"/><rect x="11.2" y="7.2" width="10.4" height="9.8" fill="#c9c9da"/><rect x="15.6" y="9.3" width="1.8" height="1.6" fill="#f4f4f4"/><rect x="15.6" y="12" width="1.8" height="2" fill="#fff"/><path d="M10.8 13.2L4 24L25.8 30L21.6 16.6L11.2 16.8Z" fill="url(#cone)"/><path d="M4 24L25.8 30L23.6 27.6L5.4 22.4Z" fill="#f2f2f4"/></svg>
<div style="left:95px;top:110px;width:32px;height:8px;background:#ffa200;"></div>
<span class="t" style="left:99.5px;top:109.10px;font-size:7.8px;line-height:10px;color:#140c00;letter-spacing:-0.211px;font-weight:700;">Object</span>
<svg style="left:140px;top:120px;" width="12" height="12" viewBox="0 0 12 12"><path d="M5.8 0.2V11.4M0.2 5.8H11.4" stroke="#d2d2d2" stroke-width="2.1" fill="none"/></svg>
<svg style="left:54px;top:150px;" width="16" height="12" viewBox="0 0 16 12"><path d="M0.2 6C2.5 1.8 5.5 0.3 8 0.3S13.5 1.8 15.8 6C13.5 10.2 10.5 11.7 8 11.7S2.5 10.2 0.2 6Z" fill="#2b3036"/><circle cx="8" cy="6" r="3.9" fill="#84c0ff"/><circle cx="8" cy="6" r="2" fill="#2b3036"/></svg>
<svg style="left:55px;top:166px;" width="14" height="17" viewBox="0 0 14 17"><path d="M3.4 8V5.2A3.6 3.6 0 0 1 10.6 5.2V8" stroke="#2b3036" stroke-width="2.1" fill="none"/><rect x="0" y="7.4" width="14" height="9.4" rx="0.8" fill="#2b3036"/><circle cx="7" cy="10.6" r="1.5" fill="#84c0ff"/><path d="M6.2 11H7.8L8.3 15H5.7Z" fill="#84c0ff"/></svg>
<div style="left:76px;top:150px;width:32px;height:32px;background:#353a40;"></div>
<svg style="left:76px;top:150px;" width="32" height="32" viewBox="0 0 32 32"><path d="M16 10.5V18L9.3 22.4M16 18L23.6 22.6" stroke="#c4c4c4" stroke-width="1" fill="none"/><text x="16" y="8.2" font-family="Liberation Sans,sans-serif" font-weight="700" font-size="8.6" text-anchor="middle" fill="#f0f0f0">Y</text><text x="4.6" y="30" font-family="Liberation Sans,sans-serif" font-weight="700" font-size="8.6" text-anchor="middle" fill="#f0f0f0">Z</text><text x="27.6" y="30" font-family="Liberation Sans,sans-serif" font-weight="700" font-size="8.6" text-anchor="middle" fill="#f0f0f0">X</text></svg>
<svg style="left:110px;top:150px;overflow:hidden;" width="32" height="32" viewBox="0 0 32 32"><rect width="32" height="32" fill="#02040a"/><circle cx="16" cy="20.5" r="12.5" fill="url(#glow)" opacity="0.8"/><path d="M1 20.2H31" stroke="#9cc4ff" stroke-width="1" opacity="0.8"/><path d="M2 16.5L11 12.6M21 11.5L29 14" stroke="#dbe9ff" stroke-width="1.3" opacity="0.85"/><path d="M7.5 10H27V15.6H24.6V12.8H19V27.8H22V30.4H11.4V27.8H14.6V12.8H9.8V15.6H7.5Z" fill="#0a1530" fill-opacity="0.55" stroke="#e8f0ff" stroke-width="0.9"/></svg>
<div style="left:110px;top:150px;width:32px;height:8px;background:#ffa200;"></div>
<span class="t" style="left:120.25px;top:149.10px;font-size:7.8px;line-height:10px;color:#140c00;letter-spacing:-0.988px;font-weight:700;">Text</span>
<svg style="left:144px;top:150px;overflow:hidden;" width="32" height="32" viewBox="0 0 32 32"><rect width="32" height="32" fill="url(#chk)"/><rect x="11" y="7" width="10" height="9" fill="#cfd0e2" opacity="0.95"/><path d="M1 20.2H31" stroke="#c8d4e8" stroke-width="1" opacity="0.5"/><path d="M7.5 10H27V15.6H24.6V12.8H19V27.8H22V30.4H11.4V27.8H14.6V12.8H9.8V15.6H7.5Z" fill="#9fb6d8" fill-opacity="0.35" stroke="#f0f4fb" stroke-width="0.9" stroke-opacity="0.85"/><rect x="14.8" y="18" width="4" height="9.6" fill="#0b1730" opacity="0.6"/></svg>
<div style="left:144px;top:150px;width:32px;height:8px;background:#ffa200;"></div>
<span class="t" style="left:154.25px;top:149.10px;font-size:7.8px;line-height:10px;color:#140c00;letter-spacing:-0.988px;font-weight:700;">Text</span>
<svg style="left:189px;top:160px;" width="12" height="12" viewBox="0 0 12 12"><path d="M5.8 0.2V11.4M0.2 5.8H11.4" stroke="#2b3036" stroke-width="2.1" fill="none"/></svg>
<svg style="left:39px;top:190px;" width="16" height="12" viewBox="0 0 16 12"><path d="M0.2 6C2.5 1.8 5.5 0.3 8 0.3S13.5 1.8 15.8 6C13.5 10.2 10.5 11.7 8 11.7S2.5 10.2 0.2 6Z" fill="#d6d6d6"/><circle cx="8" cy="6" r="3.4" fill="none" stroke="#64686d" stroke-width="1.3"/><path d="M2.6 13L15 0.4" stroke="#64686d" stroke-width="1.6"/><path d="M1.4 12.4L13.8 -0.4" stroke="#d6d6d6" stroke-width="1.5"/></svg>
<svg style="left:40px;top:206px;" width="14" height="17" viewBox="0 0 14 17"><path d="M3.4 8V4.4A3.6 3.6 0 0 1 10.4 3.4" stroke="#d6d6d6" stroke-width="2.1" fill="none"/><rect x="0" y="7.4" width="14" height="9.4" rx="0.8" fill="#d6d6d6"/><circle cx="7" cy="10.6" r="1.5" fill="#64686d"/><path d="M6.2 11H7.8L8.3 15H5.7Z" fill="#64686d"/></svg>
<div style="left:61px;top:190px;width:32px;height:32px;background:#353a40;"></div>
<svg style="left:61px;top:190px;" width="32" height="32" viewBox="0 0 32 32"><path d="M16 10.5V18L9.3 22.4M16 18L23.6 22.6" stroke="#c4c4c4" stroke-width="1" fill="none"/><text x="16" y="8.2" font-family="Liberation Sans,sans-serif" font-weight="700" font-size="8.6" text-anchor="middle" fill="#f0f0f0">Y</text><text x="4.6" y="30" font-family="Liberation Sans,sans-serif" font-weight="700" font-size="8.6" text-anchor="middle" fill="#f0f0f0">Z</text><text x="27.6" y="30" font-family="Liberation Sans,sans-serif" font-weight="700" font-size="8.6" text-anchor="middle" fill="#f0f0f0">X</text></svg>
<svg style="left:106px;top:200px;" width="12" height="12" viewBox="0 0 12 12"><path d="M5.8 0.2V11.4M0.2 5.8H11.4" stroke="#d6d6d6" stroke-width="2.1" fill="none"/></svg>
<svg style="left:54px;top:230px;" width="16" height="12" viewBox="0 0 16 12"><path d="M0.2 6C2.5 1.8 5.5 0.3 8 0.3S13.5 1.8 15.8 6C13.5 10.2 10.5 11.7 8 11.7S2.5 10.2 0.2 6Z" fill="#d6d6d6"/><circle cx="8" cy="6" r="3.9" fill="#64686d"/><circle cx="8" cy="6" r="2" fill="#d6d6d6"/></svg>
<svg style="left:55px;top:246px;" width="14" height="17" viewBox="0 0 14 17"><path d="M3.4 8V4.4A3.6 3.6 0 0 1 10.4 3.4" stroke="#d6d6d6" stroke-width="2.1" fill="none"/><rect x="0" y="7.4" width="14" height="9.4" rx="0.8" fill="#d6d6d6"/><circle cx="7" cy="10.6" r="1.5" fill="#64686d"/><path d="M6.2 11H7.8L8.3 15H5.7Z" fill="#64686d"/></svg>
<div style="left:76px;top:230px;width:32px;height:32px;background:#353a40;"></div>
<svg style="left:76px;top:230px;" width="32" height="32" viewBox="0 0 32 32"><path d="M16 10.5V18L9.3 22.4M16 18L23.6 22.6" stroke="#c4c4c4" stroke-width="1" fill="none"/><text x="16" y="8.2" font-family="Liberation Sans,sans-serif" font-weight="700" font-size="8.6" text-anchor="middle" fill="#f0f0f0">Y</text><text x="4.6" y="30" font-family="Liberation Sans,sans-serif" font-weight="700" font-size="8.6" text-anchor="middle" fill="#f0f0f0">Z</text><text x="27.6" y="30" font-family="Liberation Sans,sans-serif" font-weight="700" font-size="8.6" text-anchor="middle" fill="#f0f0f0">X</text></svg>
<div style="left:110px;top:230px;width:32px;height:32px;background:#33373d;"></div>
<svg style="left:110px;top:230px;" width="32" height="32" viewBox="0 0 32 32"><rect x="3.5" y="12.5" width="19" height="15.5" fill="none" stroke="#d2d2d2" stroke-width="1.3"/><circle cx="8.4" cy="17" r="1.8" fill="#d2d2d2"/><path d="M4.5 27.2L10 20.6L13.6 24.6L17.5 19.6L22 27.2Z" fill="#d2d2d2"/><rect x="17.8" y="9.4" width="10.6" height="10.6" fill="#33373d" stroke="#d2d2d2" stroke-width="1.2"/><path d="M20.6 17.2L25.8 12" stroke="#d2d2d2" stroke-width="1.3"/><path d="M22.6 11.6H26.2V15.2Z" fill="#d2d2d2"/><path d="M20.2 14.4V17.6H23.4Z" fill="#d2d2d2"/></svg>
<div style="left:110px;top:230px;width:32px;height:8px;background:#ffa200;"></div>
<span class="t" style="left:119.0px;top:229.10px;font-size:7.8px;line-height:10px;color:#140c00;letter-spacing:-1.484px;font-weight:700;">Quad</span>
<svg style="left:144px;top:230px;" width="32" height="32" viewBox="0 0 32 32"><rect width="32" height="32" fill="url(#chk2)"/><circle cx="16" cy="16.5" r="13" fill="url(#globe)"/><path d="M12 6.5C15 5 19 5.5 21 8C19 10 17 9.5 16 12C14 13 12.5 11.5 11 10.5C10.5 8.8 11 7.5 12 6.5Z M17 14C20 13 23.5 14.5 24.5 17.5C24 21 22 24.5 19.5 25C18 22.5 18.6 20 17.4 18C16.3 16.5 16.2 15 17 14Z M6 13C8 12.5 9.5 14.5 9 17C8 18.5 6.8 18 5.6 16.8C5.2 15.2 5.4 14 6 13Z" fill="#062c5e" opacity="0.8"/></svg>
<svg style="left:189px;top:240px;" width="12" height="12" viewBox="0 0 12 12"><path d="M5.8 0.2V11.4M0.2 5.8H11.4" stroke="#d6d6d6" stroke-width="2.1" fill="none"/></svg>
<svg style="left:54px;top:270px;" width="16" height="12" viewBox="0 0 16 12"><path d="M0.2 6C2.5 1.8 5.5 0.3 8 0.3S13.5 1.8 15.8 6C13.5 10.2 10.5 11.7 8 11.7S2.5 10.2 0.2 6Z" fill="#d6d6d6"/><circle cx="8" cy="6" r="3.9" fill="#64686d"/><circle cx="8" cy="6" r="2" fill="#d6d6d6"/></svg>
<svg style="left:55px;top:286px;" width="14" height="17" viewBox="0 0 14 17"><path d="M3.4 8V4.4A3.6 3.6 0 0 1 10.4 3.4" stroke="#d6d6d6" stroke-width="2.1" fill="none"/><rect x="0" y="7.4" width="14" height="9.4" rx="0.8" fill="#d6d6d6"/><circle cx="7" cy="10.6" r="1.5" fill="#64686d"/><path d="M6.2 11H7.8L8.3 15H5.7Z" fill="#64686d"/></svg>
<div style="left:76px;top:270px;width:32px;height:32px;background:#353a40;"></div>
<svg style="left:76px;top:270px;" width="32" height="32" viewBox="0 0 32 32"><path d="M16 10.5V18L9.3 22.4M16 18L23.6 22.6" stroke="#c4c4c4" stroke-width="1" fill="none"/><text x="16" y="8.2" font-family="Liberation Sans,sans-serif" font-weight="700" font-size="8.6" text-anchor="middle" fill="#f0f0f0">Y</text><text x="4.6" y="30" font-family="Liberation Sans,sans-serif" font-weight="700" font-size="8.6" text-anchor="middle" fill="#f0f0f0">Z</text><text x="27.6" y="30" font-family="Liberation Sans,sans-serif" font-weight="700" font-size="8.6" text-anchor="middle" fill="#f0f0f0">X</text></svg>
<svg style="left:110px;top:270px;overflow:hidden;" width="32" height="32" viewBox="0 0 32 32"><rect width="32" height="32" fill="#02040a"/><circle cx="16" cy="20.5" r="12.5" fill="url(#glow)" opacity="0.8"/><path d="M1 20.2H31" stroke="#9cc4ff" stroke-width="1" opacity="0.8"/><path d="M2 16.5L11 12.6M21 11.5L29 14" stroke="#dbe9ff" stroke-width="1.3" opacity="0.85"/><path d="M7.5 10H27V15.6H24.6V12.8H19V27.8H22V30.4H11.4V27.8H14.6V12.8H9.8V15.6H7.5Z" fill="#0a1530" fill-opacity="0.55" stroke="#e8f0ff" stroke-width="0.9"/></svg>
<div style="left:110px;top:270px;width:32px;height:8px;background:#ffa200;"></div>
<span class="t" style="left:120.25px;top:269.10px;font-size:7.8px;line-height:10px;color:#140c00;letter-spacing:-0.988px;font-weight:700;">Text</span>
<svg style="left:155px;top:280px;" width="12" height="12" viewBox="0 0 12 12"><path d="M5.8 0.2V11.4M0.2 5.8H11.4" stroke="#d6d6d6" stroke-width="2.1" fill="none"/></svg>
<svg style="left:313px;top:106px;" width="16" height="16" viewBox="0 0 16 16"><rect x="0.5" y="0.5" width="4" height="4" fill="none" stroke="#54585d"/><rect x="0" y="6" width="5" height="4" fill="#54585d"/><rect x="0.5" y="11.5" width="4" height="4" fill="none" stroke="#54585d"/><rect x="6.5" y="0.5" width="9" height="15" fill="none" stroke="#54585d"/></svg>
<svg style="left:313px;top:133px;" width="16" height="15" viewBox="0 0 16 15"><path d="M1.6 0H14.4A1.6 1.6 0 0 1 16 1.6V9A1.6 1.6 0 0 1 14.4 10.6H5.6L3 13.6V10.6H1.6A1.6 1.6 0 0 1 0 9V1.6A1.6 1.6 0 0 1 1.6 0Z" fill="#d2d2d2"/><path d="M1.8 2.6H7.2M1.8 4.8H6.2M1.8 7H7.2" stroke="#7e8186" stroke-width="1.2"/><path d="M11.6 4.2V8.8" stroke="#1f2329" stroke-width="1.8"/><circle cx="11.6" cy="2.2" r="1" fill="#1f2329"/></svg>
<div style="left:308px;top:152px;width:24px;height:23px;background:transparent;border:1px solid #3b9ae6;border-radius:3.5px"></div>
<svg style="left:313px;top:160px;" width="20" height="15" viewBox="0 0 20 15"><rect x="0" y="0" width="16" height="9" fill="#bdbdbd"/><path d="M13 10.2H19L16 13.8Z" fill="#d2d2d2"/></svg>
<svg style="left:313px;top:563px;" width="16" height="16" viewBox="0 0 16 16"><path d="M0.6 3.6V0.6H3.6M12.4 0.6H15.4V3.6M15.4 12.4V15.4H12.4M3.6 15.4H0.6V12.4" stroke="#d2d2d2" stroke-width="1.2" fill="none"/><path d="M2.4 4.6A1.6 1.6 0 0 1 4 3H5.2L6 1.8H10L10.8 3H12A1.6 1.6 0 0 1 13.6 4.6V11.4A1.6 1.6 0 0 1 12 13H4A1.6 1.6 0 0 1 2.4 11.4Z" fill="#d2d2d2"/><circle cx="8" cy="7.8" r="3.5" fill="#1f2228"/><circle cx="8" cy="7.8" r="2" fill="#d2d2d2"/></svg>
<svg style="left:313px;top:588px;" width="17" height="16" viewBox="0 0 17 16"><rect x="0" y="3.2" width="11.2" height="11.4" rx="0.8" fill="#d2d2d2"/><path d="M11.8 9L16 5.8V13.4Z" fill="#d2d2d2"/><path d="M4.4 4.6C6.4 1.6 8.6 0.6 10.6 0.6S14.6 1.8 16.4 4.6C14.6 7.6 12.6 8.6 10.6 8.6S6.4 7.6 4.4 4.6Z" fill="#d2d2d2" stroke="#1f2228" stroke-width="1"/><circle cx="10.6" cy="4.4" r="2.3" fill="#1f2228"/><circle cx="10.6" cy="4.4" r="1.1" fill="#d2d2d2"/></svg>
<svg style="left:313px;top:612px;" width="17" height="18" viewBox="0 0 17 18"><path d="M6.2 1A5 5 0 0 0 3 9.6C4 10.8 4.2 11.6 4.2 13H8.6C8.6 11.6 8.8 10.8 9.8 9.6L10.6 8.2Z" fill="#d2d2d2"/><path d="M4.3 14.6H8.5M4.8 16.4H8" stroke="#d2d2d2" stroke-width="1.1"/><path d="M5.4 4.8C7.2 2 9 1 11 1S14.8 2.2 16.4 4.8C14.8 7.6 13 8.6 11 8.6S7.2 7.6 5.4 4.8Z" fill="#d2d2d2" stroke="#1f2228" stroke-width="1"/><circle cx="11" cy="4.7" r="2.3" fill="#1f2228"/><circle cx="11" cy="4.7" r="1.1" fill="#d2d2d2"/><path d="M6.4 8.6V12.4" stroke="#1f2228" stroke-width="1"/></svg>
<svg style="left:313px;top:638px;" width="16" height="16" viewBox="0 0 16 16"><circle cx="2.6" cy="2.6" r="2.1" fill="#d2d2d2"/><path d="M3 8.2L7 4.2L9.2 6.2L11.4 3.4L15.6 8.2Z" fill="#d2d2d2"/><path d="M0 10.6H16M0 14H16" stroke="#d2d2d2" stroke-width="1.3"/><circle cx="4.6" cy="10.6" r="1.5" fill="#d2d2d2"/><circle cx="8" cy="14" r="1.5" fill="#d2d2d2"/></svg>
<svg style="left:314px;top:664px;" width="14" height="14" viewBox="0 0 14 14"><rect x="0.5" y="0.5" width="13" height="13" fill="#d2d2d2" stroke="#d2d2d2"/><rect x="7" y="1.2" width="5.8" height="11.6" fill="#15181c"/><path d="M7 3A4 4 0 0 0 7 11Z" fill="#15181c"/><path d="M7 3A4 4 0 0 1 7 11Z" fill="#d2d2d2"/></svg>
<svg style="left:312px;top:688px;" width="18" height="16" viewBox="0 0 18 16"><rect x="3.4" y="0.4" width="3.4" height="3.4" fill="#54585d"/><rect x="3.4" y="9" width="3.4" height="3.4" fill="#54585d"/><rect x="11" y="3.6" width="3.4" height="3.4" fill="#54585d"/><rect x="11" y="12.4" width="3.4" height="3.4" fill="#54585d"/><path d="M5.1 4V9M12.7 7V12.4M0.4 4.6L3 2.6M7.2 2.6L10.6 4.6M15 4.6L17.6 2.6M0.4 13L3 11M7.2 11L10.6 13.4M15 13.4L17.6 11.4" stroke="#54585d" stroke-width="1.1" fill="none"/></svg>
<svg style="left:314px;top:715px;" width="14" height="13" viewBox="0 0 14 13"><rect x="1" y="0" width="5" height="2" fill="#d2d2d2"/><rect x="8" y="0" width="5" height="2" fill="#d2d2d2"/><rect x="0" y="3.4" width="14" height="8.8" fill="#d2d2d2"/><text x="7" y="10.8" font-family="Liberation Sans,sans-serif" font-weight="700" font-size="8" text-anchor="middle" fill="#1c1f23">HS</text></svg>
<svg style="left:313px;top:739px;" width="16" height="14" viewBox="0 0 16 14"><rect x="0.5" y="0.5" width="15" height="13" fill="#8b8e92" stroke="#d2d2d2"/><rect x="2.6" y="2.6" width="10.8" height="8.8" fill="#1a1d21"/><path d="M4.4 5.6H10.6M4.4 8H8.4" stroke="#eee" stroke-width="1.2"/></svg>
<svg style="left:313px;top:764px;" width="16" height="14" viewBox="0 0 16 14"><rect x="0.5" y="0.5" width="15" height="13" fill="#8b8e92" stroke="#d2d2d2"/><rect x="2.6" y="2.6" width="10.8" height="8.8" fill="#1a1d21"/><path d="M4.2 7H11.8M8 4.6V9.4" stroke="#d2d2d2" stroke-width="1.5"/><path d="M5.6 5.4V8.6M10.4 5.4V8.6" stroke="#d2d2d2" stroke-width="1"/></svg>
<svg style="left:314px;top:789px;" width="14" height="14" viewBox="0 0 14 14"><rect x="0.5" y="0.5" width="13" height="13" fill="#d2d2d2" stroke="#d2d2d2"/><rect x="7" y="1.4" width="5.4" height="11.2" fill="#000"/><path d="M3.8 2.4L11 7L3.8 11.6Z" fill="#000"/><path d="M7 4.5L10.8 7L7 9.5Z" fill="#d2d2d2"/></svg>
<svg style="left:313px;top:815px;" width="16" height="13" viewBox="0 0 16 13"><rect x="0.6" y="0.6" width="14.8" height="11.3" fill="none" stroke="#d2d2d2" stroke-width="1.2"/></svg>
<svg style="left:314px;top:836px;" width="15" height="21" viewBox="0 0 15 21"><path d="M7.5 0.6A6.3 6.3 0 0 0 3.4 11.7C4.4 12.8 4.8 13.6 4.8 15.2H10.2C10.2 13.6 10.6 12.8 11.6 11.7A6.3 6.3 0 0 0 7.5 0.6Z" fill="#d2d2d2"/><path d="M4.9 16.9H10.1M5.6 18.9H9.4" stroke="#d2d2d2" stroke-width="1.1"/><path d="M4.8 6.2H10.2M7.5 6.2V14.4" stroke="#1c1f23" stroke-width="1.3"/></svg>
<div style="left:306.5px;top:859px;width:28px;height:23px;background:transparent;border:1px solid #3b9ae6;border-radius:3.5px"></div>
<svg style="left:313px;top:863px;" width="16" height="16" viewBox="0 0 16 16"><rect x="1.7" y="1.7" width="12.6" height="12.6" fill="none" stroke="#d2d2d2" stroke-width="1"/><rect x="0" y="0" width="3.4" height="3.4" fill="#d2d2d2"/><rect x="0" y="6.3" width="3.4" height="3.4" fill="#d2d2d2"/><rect x="0" y="12.6" width="3.4" height="3.4" fill="#d2d2d2"/><rect x="6.3" y="0" width="3.4" height="3.4" fill="#d2d2d2"/><rect x="6.3" y="12.6" width="3.4" height="3.4" fill="#d2d2d2"/><rect x="12.6" y="0" width="3.4" height="3.4" fill="#d2d2d2"/><rect x="12.6" y="6.3" width="3.4" height="3.4" fill="#d2d2d2"/><rect x="12.6" y="12.6" width="3.4" height="3.4" fill="#d2d2d2"/><rect x="7.3" y="7.3" width="1.4" height="1.4" fill="#fff"/></svg>
<svg style="left:312px;top:888px;" width="18" height="18" viewBox="0 0 18 18"><path d="M2.5 0V17.6M0 14.5H17.4" stroke="#d2d2d2" stroke-width="1" fill="none"/><rect x="5" y="6" width="3" height="7" fill="#d2d2d2"/><rect x="9.2" y="8.2" width="3" height="4.8" fill="#d2d2d2"/><rect x="13.6" y="3.6" width="3.4" height="9.4" fill="#d2d2d2"/></svg>
<svg style="left:313px;top:913px;" width="16" height="16" viewBox="0 0 16 16"><rect x="4.6" y="4.6" width="6.8" height="6.8" fill="#d2d2d2"/><path d="M6 0V3.4M10 0V3.4M6 12.6V16M10 12.6V16M0 6H3.4M0 10H3.4M12.6 6H16M12.6 10H16" stroke="#d2d2d2" stroke-width="1.1"/></svg>
<svg style="left:338px;top:650px;" width="100" height="90" viewBox="0 0 100 90"><path d="M45 12V45" stroke="#7fd600" stroke-width="2"/><path d="M45 45H77" stroke="#fb3560" stroke-width="2"/><circle cx="13" cy="45" r="7" fill="#7b1a2c"/><circle cx="45" cy="77" r="7" fill="#466f00"/><circle cx="45" cy="12.8" r="8" fill="#7fd600"/><circle cx="45" cy="45" r="8" fill="#1f8ff5"/><circle cx="77" cy="45" r="8" fill="#fb3560"/><text x="45" y="15.4" font-family="Liberation Sans,sans-serif" font-size="13" text-anchor="middle" fill="#0a0a0a">y</text><text x="45" y="48.6" font-family="Liberation Sans,sans-serif" font-size="13" text-anchor="middle" fill="#0a0a0a">z</text><text x="77" y="48.6" font-family="Liberation Sans,sans-serif" font-size="13" text-anchor="middle" fill="#0a0a0a">x</text></svg>
<svg style="left:343px;top:941px;" width="6" height="21" viewBox="0 0 6 21"><rect x="0.6" y="0.6" width="4.4" height="4.8" fill="none" stroke="#e4e4e4" stroke-width="1"/><rect x="0" y="7.2" width="5.6" height="6" fill="#74b4ff"/><rect x="0.6" y="15" width="4.4" height="4.8" fill="none" stroke="#e4e4e4" stroke-width="1"/></svg>
<span class="t" style="left:383px;top:943.00px;font-size:13px;line-height:17px;color:#f4f4f4;letter-spacing:-0.151px;">All</span>
<svg style="left:438px;top:943px;" width="18" height="16" viewBox="0 0 18 16"><path d="M0 0H18V16H0Z" fill="#d2d2d2"/><path d="M4.6 0L6.6 3.4M8.6 0L10.6 3.4M12.6 0L14.6 3.4" stroke="#1f2228" stroke-width="1.3"/><rect x="5.8" y="8.4" width="6.4" height="5" fill="#1f2228"/><path d="M7.2 8.6V7A1.8 1.8 0 0 1 10.8 7V8.6" stroke="#1f2228" stroke-width="1.2" fill="none"/></svg>
<svg style="left:524px;top:942px;" width="18" height="18" viewBox="0 0 18 18"><path d="M18 1V17L0.4 9Z" fill="#d2d2d2"/></svg>
<svg style="left:559px;top:942px;" width="15" height="18" viewBox="0 0 15 18"><rect x="0" y="0" width="2.6" height="18" fill="#d2d2d2"/><path d="M14.4 2.6V15.4L4 9Z" fill="#d2d2d2"/></svg>
<svg style="left:590px;top:942px;" width="18" height="18" viewBox="0 0 18 18"><path d="M0 1V17L17.6 9Z" fill="#d2d2d2"/></svg>
<div style="left:625px;top:944px;width:14px;height:14px;background:#d2d2d2;"></div>
<svg style="left:657px;top:943px;" width="16" height="16" viewBox="0 0 16 16"><rect x="0" y="0.6" width="2.2" height="14.8" fill="#d2d2d2"/><path d="M4.2 2.2V13.8L15.4 8Z" fill="#d2d2d2"/></svg>
<svg style="left:691px;top:942px;" width="15" height="18" viewBox="0 0 15 18"><path d="M0.4 2.6V15.4L10.8 9Z" fill="#d2d2d2"/><rect x="11.4" y="0" width="2.8" height="18" fill="#d2d2d2"/></svg>
<svg style="left:769.5px;top:939px;" width="24" height="24" viewBox="-12 -12 24 24"><path d="M-3 -9H3M0 -9V-5M-3 9H3M0 9V5" stroke="#d2d2d2" stroke-width="1.1" fill="none"/><path d="M0 -4.8L4.8 0L0 4.8L-4.8 0Z" fill="#d2d2d2"/><path d="M0.2 -2.6L2.8 0L0.2 2.6Z" fill="#1f2228"/><path d="M10.4 -3V3L6.2 0Z" fill="#d2d2d2"/></svg>
<div style="left:812px;top:950.5px;width:11px;height:1.6px;background:#9a9a9a;"></div>
<div style="left:834px;top:939.5px;width:42px;height:22px;background:#1b1e23;border:1px solid #2c2f35;border-radius:1px"></div>
<span class="t" style="left:839px;top:943.00px;font-size:13px;line-height:17px;color:#f0f0f0;letter-spacing:-0.034px;">0</span>
<svg style="left:882px;top:943px;" width="9" height="16" viewBox="0 0 9 16"><path d="M0.4 5.6H8L4.2 0.6Z" fill="#d2d2d2"/><path d="M0.4 10.6H8L4.2 15.6Z" fill="#d2d2d2"/></svg>
<svg style="left:895px;top:942px;" width="19" height="19" viewBox="0 0 19 19"><circle cx="9" cy="9.8" r="7.2" fill="none" stroke="#d2d2d2" stroke-width="1.8" stroke-dasharray="4.2 1.6" stroke-dashoffset="-9"/><rect x="9.4" y="0" width="9.6" height="8.8" fill="#1f2228"/><path d="M11 1H17.2L11 7.2Z" fill="#d2d2d2"/><path d="M12.4 2.4L17 7" stroke="#d2d2d2" stroke-width="1.7"/></svg>
<svg style="left:926px;top:945px;" width="12" height="12" viewBox="0 0 12 12"><path d="M5.6 0V11.4M0 5.7H11.2" stroke="#c8c8c8" stroke-width="1.4" fill="none"/></svg>
<svg style="left:955px;top:939px;" width="24" height="24" viewBox="-12 -12 24 24"><path d="M-3 -9H3M0 -9V-5M-3 9H3M0 9V5" stroke="#d2d2d2" stroke-width="1.1" fill="none"/><path d="M0 -4.8L4.8 0L0 4.8L-4.8 0Z" fill="#d2d2d2"/><path d="M0.2 -2.6L2.8 0L0.2 2.6Z" fill="#1f2228"/><path d="M-10.6 -3V3L-6.4 0Z" fill="#d2d2d2"/></svg>
<svg style="left:989px;top:939px;" width="24" height="24" viewBox="-12 -12 24 24"><path d="M-3 -9H3M0 -9V-5M-3 9H3M0 9V5" stroke="#84c0ff" stroke-width="1.1" fill="none"/><path d="M0 -4.8L4.8 0L0 4.8L-4.8 0Z" fill="#84c0ff"/><path d="M0.2 -2.6L2.8 0L0.2 2.6Z" fill="#1f2228"/></svg>
<div style="left:1075px;top:935px;width:30.5px;height:30.5px;background:transparent;border:1.3px solid #3b9ae6;border-radius:4px"></div>
<svg style="left:1079px;top:939px;" width="24" height="24" viewBox="-12 -12 24 24"><path d="M-3 -9H3M0 -9V-6" stroke="#d2d2d2" stroke-width="1.1" fill="none"/><path d="M-9.4 -2H-4M-9.4 2H-4.6M4 -2H9.4M4.6 2H9.4" stroke="#d2d2d2" stroke-width="1.6"/><path d="M0 -4.8L4.8 0L0 4.8L-4.8 0Z" fill="#d2d2d2"/><path d="M0.2 -2.6L2.8 0L0.2 2.6Z" fill="#1f2228"/><path d="M-5 6.6H2.4" stroke="#d2d2d2" stroke-width="1.4"/><path d="M2 4.2L5.6 6.6L2 9Z" fill="#d2d2d2"/></svg>
<div style="left:1109px;top:939.5px;width:31px;height:22px;background:#1b1e23;border:1px solid #2c2f35;border-radius:1px"></div>
<span class="t" style="left:1113.5px;top:943.00px;font-size:13px;line-height:17px;color:#f0f0f0;letter-spacing:-0.234px;">50</span>
<svg style="left:1146px;top:943px;" width="9" height="16" viewBox="0 0 9 16"><path d="M0.4 5.6H8L4.2 0.6Z" fill="#d2d2d2"/><path d="M0.4 10.6H8L4.2 15.6Z" fill="#d2d2d2"/></svg>
<svg style="left:1159px;top:942px;" width="19" height="19" viewBox="0 0 19 19"><circle cx="9" cy="9.8" r="7.2" fill="none" stroke="#d2d2d2" stroke-width="1.8" stroke-dasharray="4.2 1.6" stroke-dashoffset="-9"/><rect x="9.4" y="0" width="9.6" height="8.8" fill="#1f2228"/><path d="M11 1H17.2L11 7.2Z" fill="#d2d2d2"/><path d="M12.4 2.4L17 7" stroke="#d2d2d2" stroke-width="1.7"/></svg>
<svg style="left:5px;top:936px;" width="18" height="19" viewBox="0 0 18 19"><g ><path d="M4.4 6.6A7 7 0 1 1 13.4 15.4" stroke="#d2d2d2" stroke-width="2.1" fill="none"/><path d="M0.2 1.2V8.6H7.6Z" fill="#d2d2d2"/><path d="M10.6 14.8L12.2 16.4L10.6 18L9 16.4Z" fill="#d2d2d2"/></g></svg>
<svg style="left:31px;top:936px;" width="18" height="19" viewBox="0 0 18 19"><g transform="translate(18 0) scale(-1 1)"><path d="M4.4 6.6A7 7 0 1 1 13.4 15.4" stroke="#686c71" stroke-width="2.1" fill="none"/><path d="M0.2 1.2V8.6H7.6Z" fill="#686c71"/><path d="M10.6 14.8L12.2 16.4L10.6 18L9 16.4Z" fill="#686c71"/></g></svg>
<svg style="left:57px;top:936px;" width="18" height="18" viewBox="0 0 18 18"><path d="M0.6 0.6H13.6L17.4 4.4V17.4H0.6Z" fill="#d2d2d2"/><rect x="2.8" y="9" width="12.4" height="6.8" fill="#353a40"/><rect x="10.2" y="1.2" width="2.4" height="3.8" fill="#353a40"/></svg>
<svg style="left:83px;top:936px;" width="19" height="18" viewBox="0 0 19 18"><path d="M5 7H15.4L18.4 10V17.6H5Z" fill="none" stroke="#d2d2d2" stroke-width="1.3"/><path d="M0.4 0.4H11L14.2 3.6V13.4H0.4Z" fill="#d2d2d2"/><rect x="2.4" y="7" width="9.8" height="4.8" fill="#353a40"/><rect x="7.6" y="1" width="2" height="3.2" fill="#353a40"/></svg>
<svg style="left:111px;top:938px;" width="14" height="14" viewBox="0 0 14 14"><path d="M0.4 0.4L13.6 13.6M13.6 0.4L0.4 13.6" stroke="#d2d2d2" stroke-width="1.4"/></svg>
<svg style="left:134px;top:937px;" width="20" height="18" viewBox="0 0 20 18"><circle cx="3.6" cy="12" r="3" fill="#d2d2d2"/><path d="M3.8 7.4C6 3.4 10.6 2.6 14.6 5.4" stroke="#d2d2d2" stroke-width="1.5" fill="none"/><path d="M18.6 1.4V8.6H11.2Z" fill="#d2d2d2"/><text x="15" y="16.6" font-family="Liberation Sans,sans-serif" font-weight="700" font-size="6.5" text-anchor="middle" fill="#d2d2d2">HC</text></svg>
<svg style="left:1194px;top:116px;" width="15" height="15" viewBox="0 0 15 15"><path d="M1.6 0.6H10.6L14 4V12.6A1 1 0 0 1 13 13.6H1.6A1 1 0 0 1 0.6 12.6V1.6A1 1 0 0 1 1.6 0.6Z" fill="none" stroke="#d2d2d2" stroke-width="1.1"/><path d="M10.4 0.8V4.2H13.8" fill="none" stroke="#d2d2d2" stroke-width="0.9"/><rect x="4" y="5" width="6.6" height="6.6" fill="#d2d2d2"/></svg>
<svg style="left:1293px;top:114px;" width="17" height="18" viewBox="0 0 17 18"><circle cx="7" cy="7" r="5" fill="none" stroke="#d2d2d2" stroke-width="1.6"/><path d="M10.6 10.8L15.4 16" stroke="#d2d2d2" stroke-width="2.4" stroke-linecap="round"/></svg>
<svg style="left:1445px;top:117px;" width="15" height="15" viewBox="0 0 15 15"><rect x="1" y="0.8" width="4.2" height="1.8" fill="#d2d2d2"/><rect x="7" y="0.8" width="4.2" height="1.8" fill="#d2d2d2"/><rect x="0" y="3.8" width="12.4" height="8.4" rx="0.6" fill="#d2d2d2"/><circle cx="11.4" cy="11.6" r="2.5" fill="#353a40" stroke="#d2d2d2" stroke-width="0.9"/><path d="M11.4 10V13.2M9.8 11.6H13" stroke="#d2d2d2" stroke-width="0.8"/></svg>
<svg style="left:182px;top:1013px;" width="16" height="16" viewBox="-8 -8 16 16"><path d="M0 -1.2V-6.6" stroke="#d2d2d2" stroke-width="2" transform="rotate(0)"/><path d="M-1.7 -5.6L0 -7.4L1.7 -5.6Z" fill="#d2d2d2" transform="rotate(0)"/><path d="M0 -1.2V-6.6" stroke="#d2d2d2" stroke-width="2" transform="rotate(60)"/><path d="M-1.7 -5.6L0 -7.4L1.7 -5.6Z" fill="#d2d2d2" transform="rotate(60)"/><path d="M0 -1.2V-6.6" stroke="#d2d2d2" stroke-width="2" transform="rotate(120)"/><path d="M-1.7 -5.6L0 -7.4L1.7 -5.6Z" fill="#d2d2d2" transform="rotate(120)"/><path d="M0 -1.2V-6.6" stroke="#d2d2d2" stroke-width="2" transform="rotate(180)"/><path d="M-1.7 -5.6L0 -7.4L1.7 -5.6Z" fill="#d2d2d2" transform="rotate(180)"/><path d="M0 -1.2V-6.6" stroke="#d2d2d2" stroke-width="2" transform="rotate(240)"/><path d="M-1.7 -5.6L0 -7.4L1.7 -5.6Z" fill="#d2d2d2" transform="rotate(240)"/><path d="M0 -1.2V-6.6" stroke="#d2d2d2" stroke-width="2" transform="rotate(300)"/><path d="M-1.7 -5.6L0 -7.4L1.7 -5.6Z" fill="#d2d2d2" transform="rotate(300)"/><circle r="1.6" fill="#d2d2d2"/></svg>
<svg style="left:621px;top:1015px;" width="9" height="14" viewBox="0 0 9 14"><path d="M0.8 5H7.8L4.3 0.8Z" fill="#d2d2d2"/><path d="M0.8 8.6H7.8L4.3 12.8Z" fill="#d2d2d2"/></svg>
<svg style="left:663px;top:1005px;" width="12" height="12" viewBox="0 0 12 12"><path d="M6 0V12M0 6H12" stroke="#d2d2d2" stroke-width="2" fill="none"/></svg>
<div style="left:688px;top:1010px;width:12px;height:2px;background:#d2d2d2;"></div>
<svg style="left:712px;top:1004px;" width="15" height="15" viewBox="0 0 15 15"><path d="M6 0.6H13.9V13.9H0.6V6.5" stroke="#d2d2d2" stroke-width="1.2" fill="none"/><path d="M2.6 0V5.2M0 2.6H5.2" stroke="#d2d2d2" stroke-width="1.2"/><text x="8" y="12" font-family="Liberation Sans,sans-serif" font-weight="400" font-size="9.5" text-anchor="middle" fill="#c4c4c4">D</text></svg>
<svg style="left:737px;top:1004px;" width="15" height="15" viewBox="0 0 15 15"><path d="M6 0.6H13.9V13.9H0.6V6.5" stroke="#d2d2d2" stroke-width="1.2" fill="none"/><path d="M2.6 0V5.2M0 2.6H5.2" stroke="#d2d2d2" stroke-width="1.2"/><text x="8" y="12" font-family="Liberation Sans,sans-serif" font-weight="400" font-size="9.5" text-anchor="middle" fill="#c4c4c4">A</text></svg>
<svg style="left:762px;top:1004px;" width="15" height="15" viewBox="0 0 15 15"><path d="M0.6 0V14.4" stroke="#d2d2d2" stroke-width="1.3"/><rect x="3" y="0" width="11" height="9.6" fill="#d2d2d2"/><path d="M7.4 2.4L10.8 4.8L7.4 7.2Z" fill="#353a40"/><path d="M3.6 14.4V11.4H13.4V14.4" stroke="#d2d2d2" stroke-width="1.2" fill="none"/></svg>
<svg style="left:787px;top:1004px;" width="15" height="15" viewBox="0 0 15 15"><path d="M0.6 0V14.4" stroke="#d2d2d2" stroke-width="1.3"/><rect x="3" y="4.8" width="11" height="9.6" fill="#d2d2d2"/><path d="M9.8 7.2L6.4 9.6L9.8 12Z" fill="#353a40"/><path d="M3.6 0V3H13.4V0" stroke="#d2d2d2" stroke-width="1.2" fill="none"/><path d="M0.6 9.6H3" stroke="#d2d2d2" stroke-width="1.2"/></svg>
<svg style="left:858px;top:1002px;" width="18" height="18" viewBox="-9 -9 18 18"><path d="M-2.6 -7.6H2.6M0 -7.6V-4.6M-2.6 7.6H2.6M0 7.6V4.6" stroke="#666a6f" stroke-width="1" fill="none"/><path d="M0 -4L4 0L0 4L-4 0Z" fill="#666a6f"/><path d="M0.4 -2L2.4 0L0.4 2Z" fill="#353a40"/></svg>
<svg style="left:883px;top:1002px;" width="18" height="18" viewBox="-9 -9 18 18"><path d="M-2.6 -7.6H2.6M0 -7.6V-4.6M-2.6 7.6H2.6M0 7.6V4.6" stroke="#666a6f" stroke-width="1" fill="none"/><path d="M-2.6 -2.6L2.6 2.6M2.6 -2.6L-2.6 2.6" stroke="#666a6f" stroke-width="1.4"/></svg>
<svg style="left:908px;top:1002px;" width="18" height="18" viewBox="-9 -9 18 18"><path d="M-2.8 -6.6H2.8L0 -3.6Z" fill="#666a6f"/><path d="M-4.2 -1H4.2L1 3V7.4H-1V3Z" fill="#666a6f"/></svg>
<svg style="left:933px;top:1002px;" width="18" height="18" viewBox="-9 -9 18 18"><path d="M-2.4 -7.4L2.4 -2.8M2.4 -7.4L-2.4 -2.8" stroke="#666a6f" stroke-width="1.3"/><path d="M-4.2 -1H4.2L1 3V7.4H-1V3Z" fill="#666a6f"/></svg>
<svg style="left:958px;top:1002px;" width="18" height="18" viewBox="-9 -9 18 18"><path d="M0 -6.4L3.4 -3L0 0.4L-3.4 -3Z" fill="#666a6f"/><path d="M-6 3.6H6" stroke="#666a6f" stroke-width="1"/><circle cx="-6.4" cy="3.6" r="1.3" fill="#353a40" stroke="#666a6f" stroke-width="0.9"/><circle cx="6.4" cy="3.6" r="1.3" fill="#353a40" stroke="#666a6f" stroke-width="0.9"/></svg>
<svg style="left:983px;top:1002px;" width="18" height="18" viewBox="-9 -9 18 18"><path d="M0 -6.4L3.4 -3L0 0.4L-3.4 -3Z" fill="#666a6f"/><path d="M-6.4 -3C-6 2 -2 3.6 6.4 3.6" stroke="#666a6f" stroke-width="1" fill="none"/><circle cx="-6.4" cy="-3.4" r="1.3" fill="#353a40" stroke="#666a6f" stroke-width="0.9"/><circle cx="6.4" cy="3.6" r="1.3" fill="#353a40" stroke="#666a6f" stroke-width="0.9"/></svg>
<svg style="left:1008px;top:1002px;" width="18" height="18" viewBox="-9 -9 18 18"><path d="M0 -6.4L3.4 -3L0 0.4L-3.4 -3Z" fill="#666a6f"/><path d="M6.4 -3C6 2 2 3.6 -6.4 3.6" stroke="#666a6f" stroke-width="1" fill="none"/><circle cx="6.4" cy="-3.4" r="1.3" fill="#353a40" stroke="#666a6f" stroke-width="0.9"/><circle cx="-6.4" cy="3.6" r="1.3" fill="#353a40" stroke="#666a6f" stroke-width="0.9"/></svg>
<svg style="left:1033px;top:1002px;" width="18" height="18" viewBox="-9 -9 18 18"><path d="M0 -6.4L3.4 -3L0 0.4L-3.4 -3Z" fill="#666a6f"/><path d="M-6.4 -3C-6 5.4 6 5.4 6.4 -3" stroke="#666a6f" stroke-width="1" fill="none"/><circle cx="-6.4" cy="-3.4" r="1.3" fill="#353a40" stroke="#666a6f" stroke-width="0.9"/><circle cx="6.4" cy="-3.4" r="1.3" fill="#353a40" stroke="#666a6f" stroke-width="0.9"/></svg>
<svg style="left:1058px;top:1002px;" width="18" height="18" viewBox="-9 -9 18 18"><path d="M0 -3.4L3.4 0L0 3.4L-3.4 0Z" fill="#666a6f"/><path d="M-5 -4L-8 0L-5 4M5 -4L8 0L5 4" stroke="#666a6f" stroke-width="1.1" fill="none"/></svg>
<svg style="left:1874px;top:1003px;" width="16" height="16" viewBox="0 0 16 16"><circle cx="6.5" cy="6.5" r="5" fill="none" stroke="#74b4ff" stroke-width="1.4"/><path d="M10.2 10.2L14.6 14.2" stroke="#74b4ff" stroke-width="2.2"/></svg>
<div style="left:1895px;top:1000px;width:22.4px;height:21.4px;background:#1f2228;border:1.3px solid #3b9ae6;border-radius:3.5px"></div>
<svg style="left:1897px;top:1001px;" width="20" height="20" viewBox="0 0 20 20"><g transform="translate(10 10)"><rect x="-0.95" y="-8.2" width="1.9" height="3.3999999999999995" fill="#e0e0e0" transform="rotate(0)"/><rect x="-0.95" y="-8.2" width="1.9" height="3.3999999999999995" fill="#e0e0e0" transform="rotate(45)"/><rect x="-0.95" y="-8.2" width="1.9" height="3.3999999999999995" fill="#e0e0e0" transform="rotate(90)"/><rect x="-0.95" y="-8.2" width="1.9" height="3.3999999999999995" fill="#e0e0e0" transform="rotate(135)"/><rect x="-0.95" y="-8.2" width="1.9" height="3.3999999999999995" fill="#e0e0e0" transform="rotate(180)"/><rect x="-0.95" y="-8.2" width="1.9" height="3.3999999999999995" fill="#e0e0e0" transform="rotate(225)"/><rect x="-0.95" y="-8.2" width="1.9" height="3.3999999999999995" fill="#e0e0e0" transform="rotate(270)"/><rect x="-0.95" y="-8.2" width="1.9" height="3.3999999999999995" fill="#e0e0e0" transform="rotate(315)"/><circle r="5.0" fill="none" stroke="#e0e0e0" stroke-width="2.6"/></g></svg>
<svg style="left:857px;top:1027px;overflow:hidden;" width="1063" height="13" viewBox="0 0 1063 13"><rect x="0" y="0" width="1063" height="13" fill="#45484d"/><rect x="4.24" y="0" width="2" height="13" fill="#4f5256"/><rect x="16.22" y="0" width="2" height="13" fill="#4f5256"/><rect x="22.22" y="0" width="2" height="13" fill="#4f5256"/><rect x="28.21" y="0" width="2" height="13" fill="#4f5256"/><rect x="34.21" y="0" width="2" height="13" fill="#4f5256"/><rect x="46.19" y="0" width="2" height="13" fill="#4f5256"/><rect x="52.19" y="0" width="2" height="13" fill="#4f5256"/><rect x="58.18" y="0" width="2" height="13" fill="#4f5256"/><rect x="64.18" y="0" width="2" height="13" fill="#4f5256"/><rect x="76.16" y="0" width="2" height="13" fill="#4f5256"/><rect x="82.16" y="0" width="2" height="13" fill="#4f5256"/><rect x="88.15" y="0" width="2" height="13" fill="#4f5256"/><rect x="94.15" y="0" width="2" height="13" fill="#4f5256"/><rect x="106.13" y="0" width="2" height="13" fill="#4f5256"/><rect x="112.13" y="0" width="2" height="13" fill="#4f5256"/><rect x="118.12" y="0" width="2" height="13" fill="#4f5256"/><rect x="124.12" y="0" width="2" height="13" fill="#4f5256"/><rect x="136.10" y="0" width="2" height="13" fill="#4f5256"/><rect x="142.10" y="0" width="2" height="13" fill="#4f5256"/><rect x="148.09" y="0" width="2" height="13" fill="#4f5256"/><rect x="154.09" y="0" width="2" height="13" fill="#4f5256"/><rect x="166.07" y="0" width="2" height="13" fill="#4f5256"/><rect x="172.07" y="0" width="2" height="13" fill="#4f5256"/><rect x="178.06" y="0" width="2" height="13" fill="#4f5256"/><rect x="184.06" y="0" width="2" height="13" fill="#4f5256"/><rect x="196.04" y="0" width="2" height="13" fill="#4f5256"/><rect x="202.04" y="0" width="2" height="13" fill="#4f5256"/><rect x="208.03" y="0" width="2" height="13" fill="#4f5256"/><rect x="214.03" y="0" width="2" height="13" fill="#4f5256"/><rect x="226.01" y="0" width="2" height="13" fill="#4f5256"/><rect x="232.01" y="0" width="2" height="13" fill="#4f5256"/><rect x="238.00" y="0" width="2" height="13" fill="#4f5256"/><rect x="244.00" y="0" width="2" height="13" fill="#4f5256"/><rect x="255.98" y="0" width="2" height="13" fill="#4f5256"/><rect x="261.98" y="0" width="2" height="13" fill="#4f5256"/><rect x="267.97" y="0" width="2" height="13" fill="#4f5256"/><rect x="273.97" y="0" width="2" height="13" fill="#4f5256"/><rect x="285.95" y="0" width="2" height="13" fill="#4f5256"/><rect x="291.95" y="0" width="2" height="13" fill="#4f5256"/><rect x="297.94" y="0" width="2" height="13" fill="#4f5256"/><rect x="303.94" y="0" width="2" height="13" fill="#4f5256"/><rect x="315.92" y="0" width="2" height="13" fill="#4f5256"/><rect x="321.92" y="0" width="2" height="13" fill="#4f5256"/><rect x="327.91" y="0" width="2" height="13" fill="#4f5256"/><rect x="333.91" y="0" width="2" height="13" fill="#4f5256"/><rect x="345.89" y="0" width="2" height="13" fill="#4f5256"/><rect x="351.89" y="0" width="2" height="13" fill="#4f5256"/><rect x="357.88" y="0" width="2" height="13" fill="#4f5256"/><rect x="363.88" y="0" width="2" height="13" fill="#4f5256"/><rect x="375.86" y="0" width="2" height="13" fill="#4f5256"/><rect x="381.86" y="0" width="2" height="13" fill="#4f5256"/><rect x="387.85" y="0" width="2" height="13" fill="#4f5256"/><rect x="393.85" y="0" width="2" height="13" fill="#4f5256"/><rect x="405.83" y="0" width="2" height="13" fill="#4f5256"/><rect x="411.83" y="0" width="2" height="13" fill="#4f5256"/><rect x="417.82" y="0" width="2" height="13" fill="#4f5256"/><rect x="423.82" y="0" width="2" height="13" fill="#4f5256"/><rect x="435.80" y="0" width="2" height="13" fill="#4f5256"/><rect x="441.80" y="0" width="2" height="13" fill="#4f5256"/><rect x="447.79" y="0" width="2" height="13" fill="#4f5256"/><rect x="453.79" y="0" width="2" height="13" fill="#4f5256"/><rect x="465.77" y="0" width="2" height="13" fill="#4f5256"/><rect x="471.77" y="0" width="2" height="13" fill="#4f5256"/><rect x="477.76" y="0" width="2" height="13" fill="#4f5256"/><rect x="483.76" y="0" width="2" height="13" fill="#4f5256"/><rect x="495.74" y="0" width="2" height="13" fill="#4f5256"/><rect x="501.74" y="0" width="2" height="13" fill="#4f5256"/><rect x="507.73" y="0" width="2" height="13" fill="#4f5256"/><rect x="513.73" y="0" width="2" height="13" fill="#4f5256"/><rect x="525.71" y="0" width="2" height="13" fill="#4f5256"/><rect x="531.71" y="0" width="2" height="13" fill="#4f5256"/><rect x="537.70" y="0" width="2" height="13" fill="#4f5256"/><rect x="543.70" y="0" width="2" height="13" fill="#4f5256"/><rect x="555.68" y="0" width="2" height="13" fill="#4f5256"/><rect x="561.68" y="0" width="2" height="13" fill="#4f5256"/><rect x="567.67" y="0" width="2" height="13" fill="#4f5256"/><rect x="573.67" y="0" width="2" height="13" fill="#4f5256"/><rect x="585.65" y="0" width="2" height="13" fill="#4f5256"/><rect x="591.65" y="0" width="2" height="13" fill="#4f5256"/><rect x="597.64" y="0" width="2" height="13" fill="#4f5256"/><rect x="603.64" y="0" width="2" height="13" fill="#4f5256"/><rect x="615.62" y="0" width="2" height="13" fill="#4f5256"/><rect x="621.62" y="0" width="2" height="13" fill="#4f5256"/><rect x="627.61" y="0" width="2" height="13" fill="#4f5256"/><rect x="633.61" y="0" width="2" height="13" fill="#4f5256"/><rect x="645.59" y="0" width="2" height="13" fill="#4f5256"/><rect x="651.59" y="0" width="2" height="13" fill="#4f5256"/><rect x="657.58" y="0" width="2" height="13" fill="#4f5256"/><rect x="663.58" y="0" width="2" height="13" fill="#4f5256"/><rect x="675.56" y="0" width="2" height="13" fill="#4f5256"/><rect x="681.56" y="0" width="2" height="13" fill="#4f5256"/><rect x="687.55" y="0" width="2" height="13" fill="#4f5256"/><rect x="693.55" y="0" width="2" height="13" fill="#4f5256"/><rect x="705.53" y="0" width="2" height="13" fill="#4f5256"/><rect x="711.53" y="0" width="2" height="13" fill="#4f5256"/><rect x="717.52" y="0" width="2" height="13" fill="#4f5256"/><rect x="723.52" y="0" width="2" height="13" fill="#4f5256"/><rect x="735.50" y="0" width="2" height="13" fill="#4f5256"/><rect x="741.50" y="0" width="2" height="13" fill="#4f5256"/><rect x="747.49" y="0" width="2" height="13" fill="#4f5256"/><rect x="753.49" y="0" width="2" height="13" fill="#4f5256"/><rect x="765.47" y="0" width="2" height="13" fill="#4f5256"/><rect x="771.47" y="0" width="2" height="13" fill="#4f5256"/><rect x="777.46" y="0" width="2" height="13" fill="#4f5256"/><rect x="783.46" y="0" width="2" height="13" fill="#4f5256"/><rect x="795.44" y="0" width="2" height="13" fill="#4f5256"/><rect x="801.44" y="0" width="2" height="13" fill="#4f5256"/><rect x="807.43" y="0" width="2" height="13" fill="#4f5256"/><rect x="813.43" y="0" width="2" height="13" fill="#4f5256"/><rect x="825.41" y="0" width="2" height="13" fill="#4f5256"/><rect x="831.41" y="0" width="2" height="13" fill="#4f5256"/><rect x="837.40" y="0" width="2" height="13" fill="#4f5256"/><rect x="843.40" y="0" width="2" height="13" fill="#4f5256"/><rect x="855.38" y="0" width="2" height="13" fill="#4f5256"/><rect x="861.38" y="0" width="2" height="13" fill="#4f5256"/><rect x="867.37" y="0" width="2" height="13" fill="#4f5256"/><rect x="873.37" y="0" width="2" height="13" fill="#4f5256"/><rect x="885.35" y="0" width="2" height="13" fill="#4f5256"/><rect x="891.35" y="0" width="2" height="13" fill="#4f5256"/><rect x="897.34" y="0" width="2" height="13" fill="#4f5256"/><rect x="903.34" y="0" width="2" height="13" fill="#4f5256"/><rect x="915.32" y="0" width="2" height="13" fill="#4f5256"/><rect x="921.32" y="0" width="2" height="13" fill="#4f5256"/><rect x="927.31" y="0" width="2" height="13" fill="#4f5256"/><rect x="933.31" y="0" width="2" height="13" fill="#4f5256"/><rect x="945.29" y="0" width="2" height="13" fill="#4f5256"/><rect x="951.29" y="0" width="2" height="13" fill="#4f5256"/><rect x="957.28" y="0" width="2" height="13" fill="#4f5256"/><rect x="963.28" y="0" width="2" height="13" fill="#4f5256"/><rect x="975.26" y="0" width="2" height="13" fill="#4f5256"/><rect x="981.26" y="0" width="2" height="13" fill="#4f5256"/><rect x="987.25" y="0" width="2" height="13" fill="#4f5256"/><rect x="993.25" y="0" width="2" height="13" fill="#4f5256"/><rect x="1005.23" y="0" width="2" height="13" fill="#4f5256"/><rect x="1011.23" y="0" width="2" height="13" fill="#4f5256"/><rect x="1017.22" y="0" width="2" height="13" fill="#4f5256"/><rect x="1023.22" y="0" width="2" height="13" fill="#4f5256"/><rect x="1035.20" y="0" width="2" height="13" fill="#4f5256"/><rect x="1041.20" y="0" width="2" height="13" fill="#4f5256"/><rect x="1047.19" y="0" width="2" height="13" fill="#4f5256"/><rect x="1053.19" y="0" width="2" height="13" fill="#4f5256"/><rect x="40.20" y="0" width="2" height="13" fill="#717471"/><rect x="70.17" y="0" width="2" height="13" fill="#717471"/><rect x="100.14" y="0" width="2" height="13" fill="#717471"/><rect x="130.11" y="0" width="2" height="13" fill="#717471"/><rect x="160.08" y="0" width="2" height="13" fill="#717471"/><rect x="190.05" y="0" width="2" height="13" fill="#717471"/><rect x="220.02" y="0" width="2" height="13" fill="#717471"/><rect x="249.99" y="0" width="2" height="13" fill="#717471"/><rect x="279.96" y="0" width="2" height="13" fill="#717471"/><rect x="309.93" y="0" width="2" height="13" fill="#717471"/><rect x="339.90" y="0" width="2" height="13" fill="#717471"/><rect x="369.87" y="0" width="2" height="13" fill="#717471"/><rect x="399.84" y="0" width="2" height="13" fill="#717471"/><rect x="429.81" y="0" width="2" height="13" fill="#717471"/><rect x="459.78" y="0" width="2" height="13" fill="#717471"/><rect x="489.75" y="0" width="2" height="13" fill="#717471"/><rect x="519.72" y="0" width="2" height="13" fill="#717471"/><rect x="549.69" y="0" width="2" height="13" fill="#717471"/><rect x="579.66" y="0" width="2" height="13" fill="#717471"/><rect x="609.63" y="0" width="2" height="13" fill="#717471"/><rect x="639.60" y="0" width="2" height="13" fill="#717471"/><rect x="669.57" y="0" width="2" height="13" fill="#717471"/><rect x="699.54" y="0" width="2" height="13" fill="#717471"/><rect x="729.51" y="0" width="2" height="13" fill="#717471"/><rect x="759.48" y="0" width="2" height="13" fill="#717471"/><rect x="789.45" y="0" width="2" height="13" fill="#717471"/><rect x="819.42" y="0" width="2" height="13" fill="#717471"/><rect x="849.39" y="0" width="2" height="13" fill="#717471"/><rect x="879.36" y="0" width="2" height="13" fill="#717471"/><rect x="909.33" y="0" width="2" height="13" fill="#717471"/><rect x="939.30" y="0" width="2" height="13" fill="#717471"/><rect x="969.27" y="0" width="2" height="13" fill="#717471"/><rect x="999.24" y="0" width="2" height="13" fill="#717471"/><rect x="1029.21" y="0" width="2" height="13" fill="#717471"/><rect x="1059.18" y="0" width="2" height="13" fill="#717471"/><rect x="0" y="0" width="1.4" height="13" fill="#0a0a0a"/><rect x="7.6" y="0" width="7.6" height="13" fill="#5f7be0"/><rect x="10.8" y="0" width="1.6" height="13" fill="#e66a9a"/></svg>
</body></html>
